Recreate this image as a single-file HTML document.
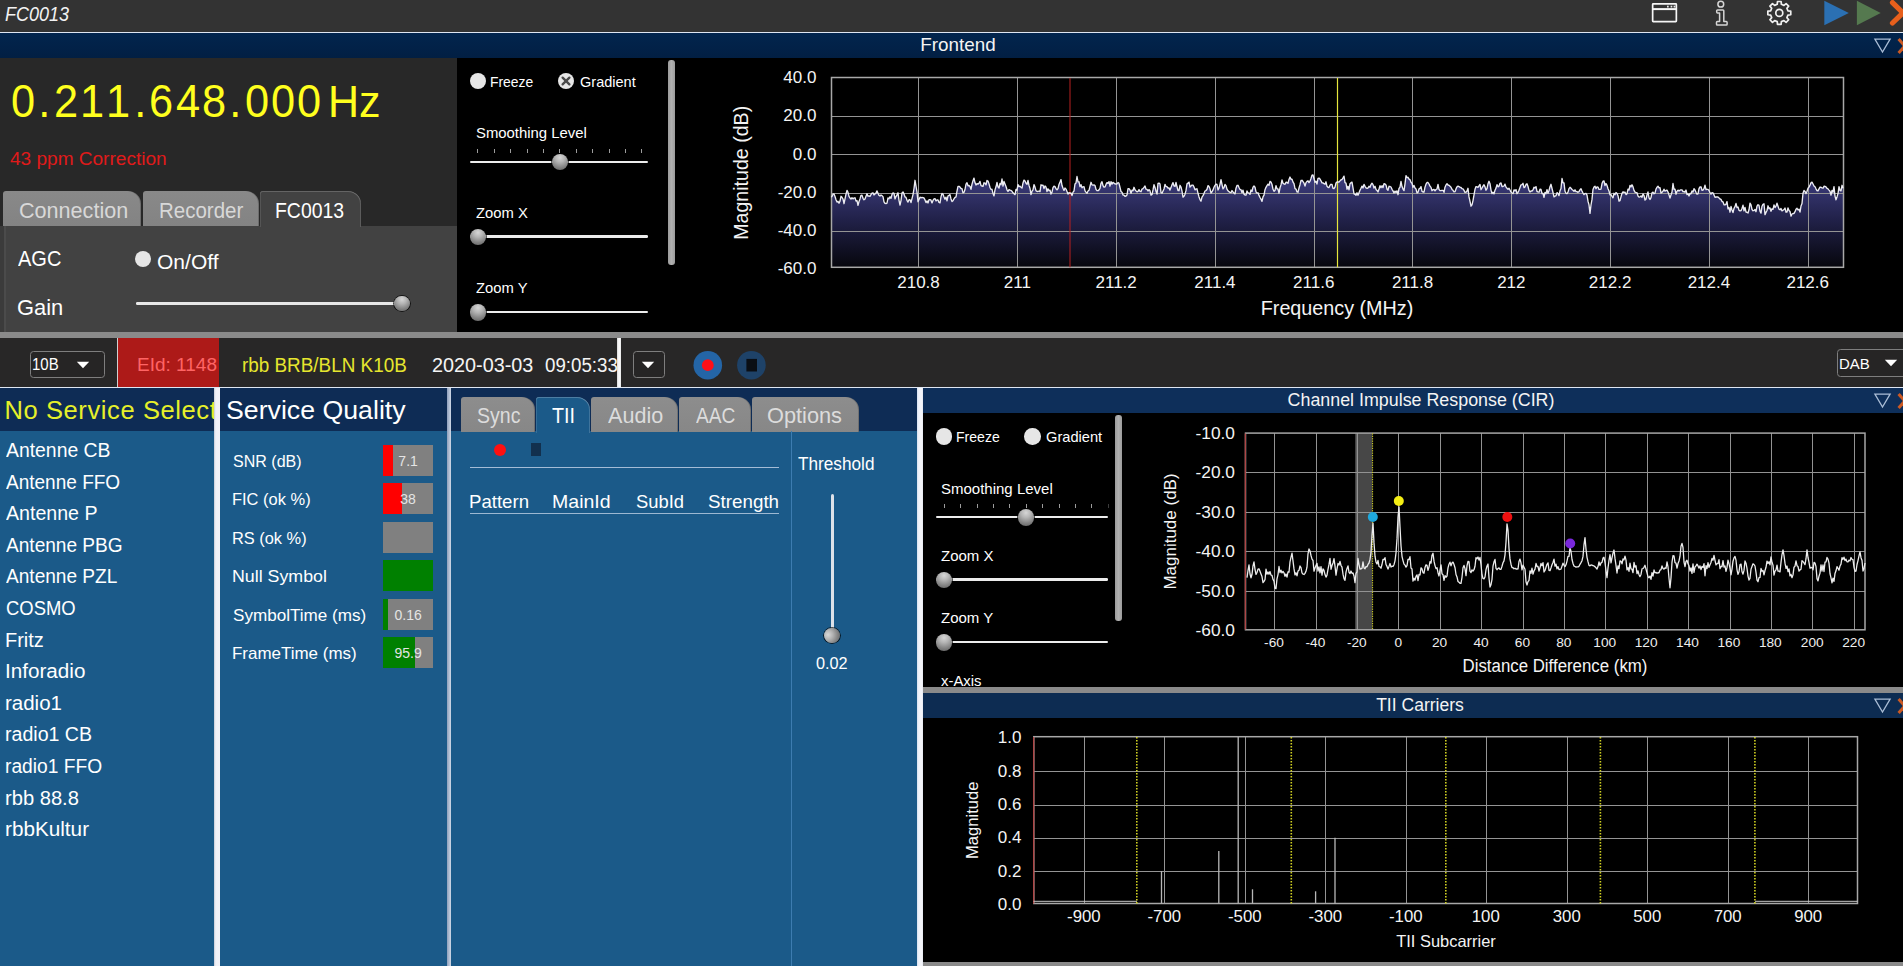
<!DOCTYPE html>
<html><head><meta charset="utf-8"><title>FC0013</title>
<style>
html,body{margin:0;padding:0;background:#000;}
body{width:1903px;height:966px;overflow:hidden;position:relative;font-family:"Liberation Sans",sans-serif;}
#root{position:absolute;left:0;top:0;width:1903px;height:966px;overflow:hidden;background:#000;}
#root div,#root svg{position:absolute;}
.t{position:absolute;white-space:nowrap;display:block;}
.m{position:absolute;white-space:nowrap;left:0;top:0;visibility:hidden;}

.knob{border-radius:50%;box-shadow:0 0 0 0.8px rgba(0,0,0,.85);background:radial-gradient(circle at 50% 22%,#d6d6d6 0%,#b4b4b4 32%,#828282 68%,#5c5c5c 100%);}
.radio{border-radius:50%;background:#e6e6e6;}
.tabg{background:linear-gradient(#8d8d8d,#878787);border-radius:3px 13px 0 0;}
.tabt{background:linear-gradient(#898989,#838383);border-radius:3px 13px 0 0;}

</style></head><body><div id="root">
<div style="left:0px;top:0px;width:1903px;height:32px;background:#333333;"></div>
<div style="left:0px;top:32px;width:1903px;height:1px;background:#dfe6f2;"></div>
<div style="left:0px;top:33px;width:1903px;height:25px;background:linear-gradient(#02254e,#021f43);"></div>
<div style="left:0px;top:58px;width:457px;height:274px;background:#282828;"></div>
<div style="left:457px;top:58px;width:1446px;height:274px;background:#000;"></div>
<div style="left:0px;top:332px;width:1903px;height:6px;background:#8a8a8a;"></div>
<div style="left:0px;top:338px;width:1903px;height:49px;background:#282727;"></div>
<div style="left:0px;top:387px;width:1903px;height:1px;background:#dfe6f2;"></div>
<div style="left:0px;top:388px;width:215px;height:43px;background:#0e2c55;"></div>
<div style="left:0px;top:431px;width:215px;height:535px;background:#1b5a89;"></div>
<div style="left:214.3px;top:388px;width:6.3px;height:578px;background:linear-gradient(90deg,#c4cad6,#f0f1f7 25%,#f2f2f8 80%,#ccd2de);"></div>
<div style="left:220px;top:388px;width:227px;height:43px;background:#0e2c55;"></div>
<div style="left:220px;top:431px;width:227px;height:535px;background:#1b5a89;"></div>
<div style="left:446.6px;top:388px;width:4.2px;height:578px;background:linear-gradient(90deg,#8fa0bc,#cfd8e6);"></div>
<div style="left:451px;top:388px;width:466px;height:43px;background:#0e2c55;"></div>
<div style="left:451px;top:430.7px;width:466px;height:535.3px;background:#1b5a89;"></div>
<div style="left:916.8px;top:388px;width:6.2px;height:578px;background:linear-gradient(90deg,#d4e0f0,#f2f4fa 30%,#f4f5fa 85%,#dfe4ee);"></div>
<div style="left:923px;top:388px;width:980px;height:25px;background:#0e2f5a;"></div>
<div style="left:923px;top:413px;width:980px;height:274px;background:#000;"></div>
<div style="left:923px;top:687px;width:980px;height:6px;background:#8a8a8a;"></div>
<div style="left:923px;top:693px;width:980px;height:25px;background:#0d2c52;"></div>
<div style="left:923px;top:718px;width:980px;height:244px;background:#000;"></div>
<div style="left:923px;top:962px;width:980px;height:4px;background:#8a8a8a;"></div>
<span class="t" style="top:4.23px;font-size:20px;line-height:20px;color:#f2f2f2;font-style:italic;left:5.00px;transform-origin:0 50%;transform:scaleX(0.9010);">FC0013</span>
<svg style="left:1650px;top:2px" width="30" height="24" viewBox="0 0 30 24"><g fill="none" stroke="#f6f6f6" stroke-width="1.7">
<rect x="2.65" y="1.85" width="23.7" height="17.7" rx="0.6"/><line x1="2.65" y1="7.1" x2="26.35" y2="7.1" stroke-width="2"/></g>
<g fill="#e8e8e8"><rect x="17.0" y="3.7" width="1.7" height="1.8"/><rect x="20.6" y="3.7" width="1.7" height="1.8"/><rect x="23.6" y="3.7" width="1.7" height="1.8"/></g></svg>
<svg style="left:1711px;top:0px" width="22" height="28" viewBox="0 0 22 28"><g fill="none" stroke="#d6d6d6" stroke-width="1.5" stroke-linejoin="round">
<circle cx="9.8" cy="4.2" r="2.9"/>
<path d="M6.5 9.9 H12.0 Q12.8 9.9 12.8 10.7 V21.6 H15.3 Q16.1 21.6 16.1 22.4 V24.3 Q16.1 25.1 15.3 25.1 H6.3 Q5.5 25.1 5.5 24.3 V22.4 Q5.5 21.6 6.3 21.6 H8.6 V12.9 H6.5 Q5.7 12.9 5.7 12.1 V10.7 Q5.7 9.9 6.5 9.9Z"/></g></svg>
<svg style="left:1764px;top:0px" width="32" height="30" viewBox="0 0 32 30"><g fill="none" stroke="#f0f0f0" stroke-width="1.7" stroke-linejoin="round">
<path d="M13.49 1.49 L17.11 1.49 L17.38 4.30 L19.95 5.36 L22.12 3.57 L24.68 6.13 L22.89 8.30 L23.95 10.87 L26.76 11.14 L26.76 14.76 L23.95 15.03 L22.89 17.60 L24.68 19.77 L22.12 22.33 L19.95 20.54 L17.38 21.60 L17.11 24.41 L13.49 24.41 L13.22 21.60 L10.65 20.54 L8.48 22.33 L5.92 19.77 L7.71 17.60 L6.65 15.03 L3.84 14.76 L3.84 11.14 L6.65 10.87 L7.71 8.30 L5.92 6.13 L8.48 3.57 L10.65 5.36 L13.22 4.30Z"/><circle cx="15.3" cy="12.95" r="3.5"/></g></svg>
<svg style="left:1820px;top:0px" width="83" height="32" viewBox="0 0 83 32">
<polygon points="4.3,0.7 28.8,13 4.3,25.3" fill="#2b70b3"/>
<polygon points="36.9,0.7 60.7,13 36.9,25.3" fill="#55794f"/>
<g stroke="#e8601c" stroke-width="5.2" stroke-linecap="round"><line x1="72.5" y1="2.6" x2="83" y2="12.8"/><line x1="72.5" y1="23" x2="83" y2="12.8"/></g></svg>
<span class="t" style="top:37.10px;font-size:17.8px;line-height:17.8px;color:#f4f4f4;left:958.24px;transform:translateX(-50%) scaleX(1.0595);">Frontend</span>
<svg style="left:1870px;top:33px" width="33" height="25" viewBox="0 0 33 25">
<polygon points="4.9,6.2 20.1,6.2 12.5,19" fill="none" stroke="#aabdd6" stroke-width="1.3"/>
<g stroke="#cc5a24" stroke-width="3.1"><line x1="28.6" y1="6" x2="41" y2="20"/><line x1="28.6" y1="20" x2="41" y2="6"/></g></svg>
<div style="left:9.95px;top:78.72px;height:45.4px;width:330px;font-size:45.4px;line-height:45.4px;color:#ffff1e;white-space:nowrap;background:none"><span style="position:absolute;left:0.00px;top:0;width:26.3px;text-align:center;transform:scaleX(0.955)">0</span><span style="position:absolute;left:26.30px;top:0;width:16.6px;text-align:center;transform:scaleX(0.955)">.</span><span style="position:absolute;left:42.90px;top:0;width:26.3px;text-align:center;transform:scaleX(0.955)">2</span><span style="position:absolute;left:69.20px;top:0;width:26.3px;text-align:center;transform:scaleX(0.955)">1</span><span style="position:absolute;left:95.50px;top:0;width:26.3px;text-align:center;transform:scaleX(0.955)">1</span><span style="position:absolute;left:121.80px;top:0;width:16.6px;text-align:center;transform:scaleX(0.955)">.</span><span style="position:absolute;left:138.40px;top:0;width:26.3px;text-align:center;transform:scaleX(0.955)">6</span><span style="position:absolute;left:164.70px;top:0;width:26.3px;text-align:center;transform:scaleX(0.955)">4</span><span style="position:absolute;left:191.00px;top:0;width:26.3px;text-align:center;transform:scaleX(0.955)">8</span><span style="position:absolute;left:217.30px;top:0;width:16.6px;text-align:center;transform:scaleX(0.955)">.</span><span style="position:absolute;left:233.90px;top:0;width:26.3px;text-align:center;transform:scaleX(0.955)">0</span><span style="position:absolute;left:260.20px;top:0;width:26.3px;text-align:center;transform:scaleX(0.955)">0</span><span style="position:absolute;left:286.50px;top:0;width:26.3px;text-align:center;transform:scaleX(0.955)">0</span></div>
<span class="t" style="top:80.11px;font-size:44px;line-height:44px;color:#ffff1e;left:328.37px;transform-origin:0 50%;transform:scaleX(0.9780);">Hz</span>
<span class="t" style="top:151.15px;font-size:17.5px;line-height:17.5px;color:#e01a1a;left:9.50px;transform-origin:0 50%;transform:scaleX(1.0878);">43 ppm Correction</span>
<div style="left:0px;top:226.4px;width:457px;height:105.6px;background:#3b3b3b;"></div>
<div style="left:4.3px;top:226.4px;width:1.6px;height:105.6px;background:#4b4b4b;"></div>
<div style="left:5.9px;top:226.4px;width:451.1px;height:105.6px;background:#424242;"></div>
<div class="tabt" style="left:3px;top:191.2px;width:138px;height:35.2px;box-shadow:inset -1px 0 0 rgba(0,0,0,.18)"></div>
<span class="t" style="top:200.25px;font-size:22px;line-height:22px;color:#d8d8d8;left:18.52px;transform-origin:0 50%;transform:scaleX(0.9811);">Connection</span>
<div class="tabt" style="left:143px;top:191.2px;width:116px;height:35.2px;box-shadow:inset -1px 0 0 rgba(0,0,0,.18)"></div>
<span class="t" style="top:200.25px;font-size:22px;line-height:22px;color:#d8d8d8;left:158.57px;transform-origin:0 50%;transform:scaleX(0.9310);">Recorder</span>
<div style="left:260px;top:191.2px;width:101px;height:36.2px;background:#424242;border-radius:3px 13px 0 0;box-shadow:inset 0 1px 0 rgba(255,255,255,.18),inset -1px 0 0 rgba(255,255,255,.14),inset 1px 0 0 rgba(255,255,255,.10)"></div>
<span class="t" style="top:200.25px;font-size:22px;line-height:22px;color:#ffffff;left:274.62px;transform-origin:0 50%;transform:scaleX(0.8827);">FC0013</span>
<span class="t" style="top:247.75px;font-size:22px;line-height:22px;color:#fff;left:18.00px;transform-origin:0 50%;transform:scaleX(0.9103);">AGC</span>
<div class="radio" style="left:135px;top:251px;width:16px;height:16px"></div>
<span class="t" style="top:251.73px;font-size:20px;line-height:20px;color:#fff;left:157.00px;transform-origin:0 50%;transform:scaleX(1.0511);">On/Off</span>
<span class="t" style="top:297.25px;font-size:22px;line-height:22px;color:#fff;left:17.01px;transform-origin:0 50%;transform:scaleX(0.9947);">Gain</span>
<div style="left:136px;top:302.2px;width:264px;height:2.6px;background:#e8e8e8;border-radius:1.3px"></div>
<div class="knob" style="left:394.05px;top:295.55px;width:15.5px;height:15.5px"></div>
<div class="radio" style="left:469.5px;top:73px;width:16px;height:16px"></div>
<span class="t" style="top:74.17px;font-size:15px;line-height:15px;color:#fff;left:490.07px;transform-origin:0 50%;transform:scaleX(0.9263);">Freeze</span>
<svg style="left:557px;top:72px" width="18" height="18" viewBox="0 0 18 18"><circle cx="9" cy="9" r="8" fill="#e6e6e6"/>
<g stroke="#4a4a4a" stroke-width="2.3" stroke-linecap="round"><line x1="5.6" y1="5.6" x2="12.4" y2="12.4"/><line x1="12.4" y1="5.6" x2="5.6" y2="12.4"/></g></svg>
<span class="t" style="top:74.17px;font-size:15px;line-height:15px;color:#fff;left:580.00px;transform-origin:0 50%;transform:scaleX(0.9681);">Gradient</span>
<span class="t" style="top:125.17px;font-size:15px;line-height:15px;color:#fff;left:475.50px;transform-origin:0 50%;transform:scaleX(0.9919);">Smoothing Level</span>
<div style="left:477px;top:148.5px;width:1px;height:4.5px;background:#9c9c9c;"></div>
<div style="left:494px;top:148.5px;width:1px;height:4.5px;background:#9c9c9c;"></div>
<div style="left:510px;top:148.5px;width:1px;height:4.5px;background:#9c9c9c;"></div>
<div style="left:527px;top:148.5px;width:1px;height:4.5px;background:#9c9c9c;"></div>
<div style="left:543px;top:148.5px;width:1px;height:4.5px;background:#9c9c9c;"></div>
<div style="left:559px;top:148.5px;width:1px;height:4.5px;background:#9c9c9c;"></div>
<div style="left:576px;top:148.5px;width:1px;height:4.5px;background:#9c9c9c;"></div>
<div style="left:592px;top:148.5px;width:1px;height:4.5px;background:#9c9c9c;"></div>
<div style="left:609px;top:148.5px;width:1px;height:4.5px;background:#9c9c9c;"></div>
<div style="left:625px;top:148.5px;width:1px;height:4.5px;background:#9c9c9c;"></div>
<div style="left:641px;top:148.5px;width:1px;height:4.5px;background:#9c9c9c;"></div>
<div style="left:470px;top:160.6px;width:177.79999999999995px;height:2.6px;background:#ececec;border-radius:1.3px"></div>
<div class="knob" style="left:552.1999999999999px;top:154.3px;width:16.2px;height:16.2px"></div>
<span class="t" style="top:205.07px;font-size:15px;line-height:15px;color:#fff;left:475.70px;transform-origin:0 50%;transform:scaleX(0.9865);">Zoom X</span>
<div style="left:470px;top:235.39999999999998px;width:177.79999999999995px;height:2.6px;background:#ececec;border-radius:1.3px"></div>
<div class="knob" style="left:470.2px;top:229.1px;width:16.2px;height:16.2px"></div>
<span class="t" style="top:280.07px;font-size:15px;line-height:15px;color:#fff;left:475.70px;transform-origin:0 50%;transform:scaleX(0.9865);">Zoom Y</span>
<div style="left:470px;top:310.7px;width:177.79999999999995px;height:2.6px;background:#ececec;border-radius:1.3px"></div>
<div class="knob" style="left:470.2px;top:304.4px;width:16.2px;height:16.2px"></div>
<div style="left:668.3px;top:60px;width:6.3px;height:205px;background:linear-gradient(90deg,#9c9c9c,#b0b0b0 50%,#9c9c9c);border-radius:3px"></div>
<svg style="left:0;top:58px" width="1903" height="274" viewBox="0 58 1903 274"><defs><linearGradient id="sg" x1="0" y1="0" x2="0" y2="1" gradientUnits="userSpaceOnUse" gradientTransform="translate(0,180) scale(1,88)"><stop offset="0" stop-color="#3b3b7a"/><stop offset="0.45" stop-color="#212149"/><stop offset="1" stop-color="#06060c"/></linearGradient></defs><polygon points="831,267.3 831.0,196.8 832.0,196.6 833.0,194.2 834.0,194.0 835.0,196.5 836.0,199.7 837.0,202.1 838.0,201.3 839.0,203.2 840.0,201.1 841.0,196.3 842.0,197.3 843.0,199.0 844.0,203.7 845.0,198.8 846.0,194.1 847.0,190.4 848.0,192.3 849.0,196.3 850.0,198.0 851.0,199.1 852.0,197.7 853.0,198.9 854.0,197.9 855.0,197.8 856.0,201.0 857.0,200.6 858.0,205.3 859.0,201.5 860.0,198.9 861.0,195.3 862.0,195.2 863.0,198.3 864.0,199.8 865.0,198.9 866.0,196.2 867.0,193.8 868.0,196.2 869.0,196.0 870.0,196.3 871.0,194.7 872.0,193.2 873.0,192.9 874.0,195.0 875.0,193.9 876.0,193.1 877.0,190.9 878.0,193.3 879.0,195.4 880.0,196.0 881.0,195.0 882.0,195.6 883.0,196.7 884.0,201.8 885.0,203.4 886.0,203.5 887.0,203.1 888.0,197.9 889.0,198.8 890.0,196.8 891.0,198.4 892.0,194.4 893.0,192.9 894.0,193.4 895.0,198.9 896.0,196.6 897.0,194.9 898.0,192.8 899.0,200.3 900.0,205.0 901.0,200.6 902.0,192.9 903.0,191.9 904.0,194.1 905.0,196.9 906.0,197.4 907.0,200.3 908.0,202.1 909.0,199.7 910.0,199.7 911.0,202.5 912.0,198.6 913.0,194.6 914.0,188.5 915.0,180.3 916.0,186.2 917.0,192.0 918.0,201.7 919.0,199.4 920.0,197.2 921.0,197.8 922.0,197.4 923.0,197.6 924.0,198.0 925.0,199.9 926.0,202.6 927.0,200.9 928.0,203.0 929.0,199.6 930.0,199.6 931.0,200.2 932.0,202.9 933.0,200.4 934.0,198.9 935.0,198.6 936.0,200.9 937.0,199.9 938.0,200.0 939.0,202.4 940.0,202.9 941.0,196.9 942.0,193.5 943.0,194.1 944.0,197.0 945.0,199.2 946.0,197.1 947.0,200.8 948.0,195.8 949.0,195.4 950.0,194.6 951.0,198.9 952.0,201.5 953.0,200.7 954.0,198.8 955.0,197.3 956.0,197.0 957.0,191.1 958.0,186.3 959.0,186.3 960.0,187.1 961.0,188.5 962.0,188.6 963.0,192.8 964.0,192.4 965.0,189.5 966.0,184.1 967.0,182.7 968.0,185.8 969.0,185.5 970.0,186.5 971.0,189.3 972.0,184.1 973.0,180.7 974.0,178.1 975.0,182.8 976.0,185.0 977.0,183.6 978.0,184.1 979.0,183.3 980.0,181.4 981.0,185.7 982.0,186.0 983.0,186.4 984.0,182.8 985.0,183.2 986.0,184.9 987.0,180.5 988.0,181.0 989.0,183.9 990.0,187.5 991.0,189.4 992.0,189.3 993.0,193.4 994.0,195.9 995.0,189.9 996.0,186.8 997.0,182.5 998.0,186.8 999.0,188.1 1000.0,183.4 1001.0,184.7 1002.0,179.0 1003.0,186.1 1004.0,181.5 1005.0,184.0 1006.0,186.5 1007.0,189.8 1008.0,191.5 1009.0,189.6 1010.0,190.2 1011.0,190.4 1012.0,191.3 1013.0,192.8 1014.0,193.8 1015.0,194.6 1016.0,189.4 1017.0,190.2 1018.0,184.6 1019.0,186.6 1020.0,186.2 1021.0,187.2 1022.0,188.1 1023.0,182.9 1024.0,180.1 1025.0,181.0 1026.0,183.2 1027.0,184.4 1028.0,180.5 1029.0,185.4 1030.0,188.5 1031.0,194.6 1032.0,191.2 1033.0,189.8 1034.0,184.6 1035.0,187.1 1036.0,190.7 1037.0,191.4 1038.0,191.5 1039.0,191.0 1040.0,191.6 1041.0,184.8 1042.0,185.4 1043.0,185.1 1044.0,188.5 1045.0,185.9 1046.0,186.9 1047.0,191.6 1048.0,188.8 1049.0,190.7 1050.0,190.1 1051.0,194.0 1052.0,192.1 1053.0,187.6 1054.0,186.1 1055.0,186.6 1056.0,188.8 1057.0,189.8 1058.0,188.6 1059.0,184.4 1060.0,182.1 1061.0,179.6 1062.0,185.6 1063.0,188.2 1064.0,190.4 1065.0,188.0 1066.0,189.1 1067.0,191.4 1068.0,194.0 1069.0,192.7 1070.0,193.3 1071.0,192.9 1072.0,195.5 1073.0,192.1 1074.0,191.0 1075.0,183.9 1076.0,182.9 1077.0,176.5 1078.0,181.9 1079.0,181.8 1080.0,186.6 1081.0,184.7 1082.0,187.9 1083.0,186.8 1084.0,186.7 1085.0,190.8 1086.0,192.2 1087.0,193.2 1088.0,191.0 1089.0,190.3 1090.0,186.4 1091.0,182.3 1092.0,184.8 1093.0,185.1 1094.0,184.9 1095.0,185.5 1096.0,189.3 1097.0,190.6 1098.0,190.7 1099.0,189.9 1100.0,188.3 1101.0,183.3 1102.0,181.7 1103.0,185.7 1104.0,187.2 1105.0,186.9 1106.0,184.4 1107.0,182.6 1108.0,183.4 1109.0,181.7 1110.0,186.2 1111.0,181.6 1112.0,184.2 1113.0,182.4 1114.0,183.2 1115.0,183.8 1116.0,184.0 1117.0,184.0 1118.0,182.5 1119.0,183.3 1120.0,187.5 1121.0,191.5 1122.0,192.3 1123.0,195.1 1124.0,195.1 1125.0,196.3 1126.0,196.0 1127.0,195.0 1128.0,188.6 1129.0,188.7 1130.0,190.0 1131.0,193.3 1132.0,190.2 1133.0,190.7 1134.0,187.3 1135.0,189.7 1136.0,190.9 1137.0,191.8 1138.0,191.3 1139.0,189.6 1140.0,191.4 1141.0,191.7 1142.0,189.1 1143.0,188.6 1144.0,187.3 1145.0,186.0 1146.0,189.2 1147.0,189.3 1148.0,191.0 1149.0,189.6 1150.0,190.8 1151.0,195.1 1152.0,194.5 1153.0,189.9 1154.0,184.7 1155.0,187.4 1156.0,191.3 1157.0,194.1 1158.0,183.4 1159.0,183.1 1160.0,184.1 1161.0,192.7 1162.0,193.2 1163.0,191.0 1164.0,189.0 1165.0,184.4 1166.0,186.5 1167.0,186.6 1168.0,188.1 1169.0,187.9 1170.0,190.1 1171.0,187.6 1172.0,184.7 1173.0,182.6 1174.0,186.0 1175.0,186.5 1176.0,182.5 1177.0,186.8 1178.0,190.5 1179.0,190.7 1180.0,185.3 1181.0,187.0 1182.0,191.2 1183.0,197.1 1184.0,196.3 1185.0,194.2 1186.0,190.4 1187.0,183.8 1188.0,183.2 1189.0,182.1 1190.0,187.0 1191.0,186.0 1192.0,185.1 1193.0,185.1 1194.0,187.0 1195.0,189.9 1196.0,189.0 1197.0,188.8 1198.0,193.3 1199.0,196.9 1200.0,199.6 1201.0,201.2 1202.0,197.1 1203.0,195.6 1204.0,193.6 1205.0,191.0 1206.0,190.5 1207.0,189.3 1208.0,185.6 1209.0,186.5 1210.0,188.8 1211.0,193.0 1212.0,191.8 1213.0,189.9 1214.0,187.3 1215.0,185.4 1216.0,184.1 1217.0,184.5 1218.0,190.0 1219.0,188.2 1220.0,184.3 1221.0,179.7 1222.0,184.5 1223.0,188.9 1224.0,187.6 1225.0,184.4 1226.0,185.6 1227.0,189.2 1228.0,190.8 1229.0,191.7 1230.0,192.3 1231.0,192.6 1232.0,190.5 1233.0,192.1 1234.0,193.1 1235.0,193.9 1236.0,188.2 1237.0,185.4 1238.0,185.3 1239.0,187.5 1240.0,189.5 1241.0,189.6 1242.0,192.8 1243.0,190.1 1244.0,194.2 1245.0,195.0 1246.0,195.1 1247.0,191.0 1248.0,192.8 1249.0,193.1 1250.0,194.3 1251.0,190.0 1252.0,191.5 1253.0,187.1 1254.0,186.0 1255.0,187.2 1256.0,191.9 1257.0,193.2 1258.0,192.8 1259.0,195.4 1260.0,197.5 1261.0,199.2 1262.0,201.4 1263.0,196.9 1264.0,195.1 1265.0,189.7 1266.0,187.3 1267.0,185.6 1268.0,184.2 1269.0,185.4 1270.0,181.4 1271.0,182.0 1272.0,184.5 1273.0,189.3 1274.0,191.3 1275.0,190.4 1276.0,185.7 1277.0,188.8 1278.0,189.0 1279.0,193.2 1280.0,187.8 1281.0,184.9 1282.0,179.9 1283.0,183.3 1284.0,183.9 1285.0,184.3 1286.0,182.2 1287.0,182.5 1288.0,183.3 1289.0,179.4 1290.0,177.0 1291.0,179.2 1292.0,179.2 1293.0,182.1 1294.0,183.7 1295.0,188.7 1296.0,189.1 1297.0,191.9 1298.0,192.2 1299.0,188.0 1300.0,184.7 1301.0,180.5 1302.0,180.3 1303.0,181.5 1304.0,183.1 1305.0,186.0 1306.0,182.6 1307.0,181.4 1308.0,180.8 1309.0,182.6 1310.0,181.2 1311.0,178.5 1312.0,175.1 1313.0,174.9 1314.0,178.8 1315.0,182.3 1316.0,181.3 1317.0,184.0 1318.0,178.3 1319.0,178.1 1320.0,179.1 1321.0,180.8 1322.0,182.9 1323.0,182.9 1324.0,183.7 1325.0,184.2 1326.0,181.8 1327.0,186.3 1328.0,187.3 1329.0,187.6 1330.0,185.2 1331.0,184.3 1332.0,184.4 1333.0,188.3 1334.0,188.5 1335.0,187.2 1336.0,183.0 1337.0,182.0 1338.0,181.8 1339.0,182.1 1340.0,180.9 1341.0,179.8 1342.0,179.5 1343.0,177.9 1344.0,176.2 1345.0,182.7 1346.0,183.2 1347.0,189.2 1348.0,186.3 1349.0,189.8 1350.0,183.7 1351.0,182.7 1352.0,182.1 1353.0,187.8 1354.0,193.8 1355.0,194.3 1356.0,195.3 1357.0,192.8 1358.0,195.2 1359.0,192.7 1360.0,190.2 1361.0,188.3 1362.0,186.1 1363.0,188.0 1364.0,184.4 1365.0,186.3 1366.0,187.9 1367.0,188.3 1368.0,188.0 1369.0,186.3 1370.0,187.2 1371.0,184.6 1372.0,183.2 1373.0,184.6 1374.0,188.0 1375.0,186.3 1376.0,189.4 1377.0,190.4 1378.0,192.0 1379.0,189.0 1380.0,185.7 1381.0,187.7 1382.0,185.7 1383.0,187.6 1384.0,183.7 1385.0,184.0 1386.0,184.9 1387.0,189.2 1388.0,190.2 1389.0,186.3 1390.0,186.5 1391.0,187.0 1392.0,189.3 1393.0,190.9 1394.0,193.0 1395.0,191.1 1396.0,192.5 1397.0,190.8 1398.0,194.7 1399.0,188.4 1400.0,187.2 1401.0,181.4 1402.0,186.6 1403.0,189.1 1404.0,190.6 1405.0,183.8 1406.0,175.7 1407.0,177.5 1408.0,177.3 1409.0,179.1 1410.0,179.7 1411.0,182.2 1412.0,183.4 1413.0,187.3 1414.0,185.4 1415.0,188.1 1416.0,189.0 1417.0,192.8 1418.0,192.3 1419.0,188.9 1420.0,188.3 1421.0,186.6 1422.0,191.4 1423.0,192.0 1424.0,192.1 1425.0,187.1 1426.0,184.2 1427.0,182.5 1428.0,182.5 1429.0,184.0 1430.0,186.1 1431.0,187.4 1432.0,190.7 1433.0,189.7 1434.0,189.5 1435.0,190.9 1436.0,189.5 1437.0,189.0 1438.0,184.5 1439.0,189.3 1440.0,190.6 1441.0,190.6 1442.0,190.3 1443.0,190.4 1444.0,192.3 1445.0,187.2 1446.0,184.9 1447.0,183.8 1448.0,185.0 1449.0,185.3 1450.0,186.3 1451.0,187.3 1452.0,189.4 1453.0,190.3 1454.0,191.8 1455.0,191.7 1456.0,188.9 1457.0,186.8 1458.0,186.2 1459.0,186.6 1460.0,187.3 1461.0,187.5 1462.0,188.7 1463.0,188.9 1464.0,190.4 1465.0,192.4 1466.0,192.2 1467.0,191.0 1468.0,188.3 1469.0,196.9 1470.0,201.3 1471.0,206.2 1472.0,204.8 1473.0,200.6 1474.0,194.9 1475.0,189.3 1476.0,186.6 1477.0,186.9 1478.0,187.3 1479.0,185.9 1480.0,184.5 1481.0,189.7 1482.0,188.0 1483.0,186.1 1484.0,184.7 1485.0,186.9 1486.0,190.2 1487.0,188.7 1488.0,183.8 1489.0,181.3 1490.0,183.7 1491.0,190.1 1492.0,193.5 1493.0,192.3 1494.0,193.9 1495.0,190.2 1496.0,188.1 1497.0,184.6 1498.0,186.8 1499.0,186.2 1500.0,183.3 1501.0,183.0 1502.0,186.5 1503.0,186.5 1504.0,186.0 1505.0,184.1 1506.0,187.1 1507.0,188.2 1508.0,189.4 1509.0,188.3 1510.0,190.0 1511.0,192.1 1512.0,193.0 1513.0,193.6 1514.0,189.9 1515.0,190.7 1516.0,189.6 1517.0,193.7 1518.0,192.4 1519.0,190.3 1520.0,187.6 1521.0,184.8 1522.0,184.7 1523.0,183.3 1524.0,187.6 1525.0,186.9 1526.0,184.4 1527.0,183.8 1528.0,186.5 1529.0,190.3 1530.0,192.0 1531.0,190.9 1532.0,191.0 1533.0,189.9 1534.0,187.2 1535.0,187.9 1536.0,186.6 1537.0,191.5 1538.0,191.9 1539.0,192.2 1540.0,189.1 1541.0,189.5 1542.0,193.6 1543.0,193.4 1544.0,197.4 1545.0,192.4 1546.0,193.7 1547.0,189.7 1548.0,193.3 1549.0,190.5 1550.0,186.8 1551.0,184.3 1552.0,188.5 1553.0,192.5 1554.0,196.8 1555.0,196.2 1556.0,195.7 1557.0,192.6 1558.0,193.5 1559.0,195.6 1560.0,190.8 1561.0,188.5 1562.0,178.5 1563.0,182.8 1564.0,182.9 1565.0,191.3 1566.0,193.3 1567.0,193.6 1568.0,192.1 1569.0,188.6 1570.0,187.3 1571.0,188.3 1572.0,189.5 1573.0,190.2 1574.0,191.4 1575.0,189.8 1576.0,191.6 1577.0,191.7 1578.0,192.3 1579.0,191.6 1580.0,189.8 1581.0,188.7 1582.0,191.1 1583.0,193.0 1584.0,194.6 1585.0,193.6 1586.0,193.4 1587.0,195.2 1588.0,201.2 1589.0,204.9 1590.0,213.3 1591.0,205.0 1592.0,199.4 1593.0,189.4 1594.0,187.0 1595.0,186.2 1596.0,188.7 1597.0,186.9 1598.0,187.1 1599.0,189.4 1600.0,189.4 1601.0,189.2 1602.0,183.6 1603.0,181.2 1604.0,181.0 1605.0,185.5 1606.0,183.5 1607.0,185.4 1608.0,188.8 1609.0,191.0 1610.0,194.8 1611.0,194.7 1612.0,196.3 1613.0,197.8 1614.0,193.3 1615.0,194.7 1616.0,192.5 1617.0,193.5 1618.0,195.7 1619.0,201.0 1620.0,200.6 1621.0,196.9 1622.0,193.3 1623.0,191.8 1624.0,192.4 1625.0,192.1 1626.0,194.6 1627.0,193.8 1628.0,189.1 1629.0,190.1 1630.0,185.5 1631.0,186.9 1632.0,184.8 1633.0,186.9 1634.0,190.4 1635.0,192.2 1636.0,192.6 1637.0,192.7 1638.0,196.0 1639.0,197.1 1640.0,196.8 1641.0,195.9 1642.0,197.3 1643.0,194.0 1644.0,195.3 1645.0,200.1 1646.0,199.2 1647.0,194.9 1648.0,192.0 1649.0,197.9 1650.0,199.5 1651.0,197.6 1652.0,192.8 1653.0,192.2 1654.0,193.8 1655.0,193.1 1656.0,189.1 1657.0,187.2 1658.0,186.2 1659.0,187.9 1660.0,187.7 1661.0,193.0 1662.0,192.2 1663.0,191.2 1664.0,189.2 1665.0,191.1 1666.0,190.5 1667.0,190.2 1668.0,192.0 1669.0,194.9 1670.0,198.0 1671.0,194.9 1672.0,192.1 1673.0,183.5 1674.0,189.3 1675.0,189.1 1676.0,194.2 1677.0,191.2 1678.0,190.1 1679.0,191.0 1680.0,190.2 1681.0,189.8 1682.0,189.9 1683.0,191.8 1684.0,191.4 1685.0,192.2 1686.0,190.0 1687.0,194.5 1688.0,193.9 1689.0,196.0 1690.0,193.4 1691.0,193.8 1692.0,191.0 1693.0,192.1 1694.0,188.7 1695.0,189.9 1696.0,192.2 1697.0,194.2 1698.0,193.8 1699.0,188.6 1700.0,186.8 1701.0,186.8 1702.0,190.3 1703.0,190.1 1704.0,188.7 1705.0,185.1 1706.0,189.6 1707.0,189.3 1708.0,189.4 1709.0,190.5 1710.0,192.7 1711.0,194.2 1712.0,192.6 1713.0,192.9 1714.0,194.9 1715.0,197.3 1716.0,197.0 1717.0,197.0 1718.0,197.0 1719.0,197.9 1720.0,199.0 1721.0,199.4 1722.0,201.5 1723.0,201.8 1724.0,204.8 1725.0,204.9 1726.0,204.2 1727.0,201.6 1728.0,208.9 1729.0,207.5 1730.0,212.2 1731.0,206.5 1732.0,210.0 1733.0,212.5 1734.0,208.3 1735.0,206.7 1736.0,203.4 1737.0,207.5 1738.0,207.0 1739.0,210.2 1740.0,210.9 1741.0,210.6 1742.0,208.5 1743.0,205.2 1744.0,210.8 1745.0,207.5 1746.0,212.0 1747.0,212.3 1748.0,213.0 1749.0,209.8 1750.0,203.1 1751.0,204.8 1752.0,209.5 1753.0,210.7 1754.0,210.6 1755.0,209.5 1756.0,211.7 1757.0,206.1 1758.0,204.7 1759.0,205.4 1760.0,211.2 1761.0,213.1 1762.0,206.2 1763.0,204.3 1764.0,203.8 1765.0,214.6 1766.0,212.4 1767.0,210.5 1768.0,205.8 1769.0,208.7 1770.0,207.9 1771.0,211.2 1772.0,208.8 1773.0,209.4 1774.0,204.9 1775.0,207.5 1776.0,206.1 1777.0,203.2 1778.0,206.2 1779.0,209.1 1780.0,209.8 1781.0,208.5 1782.0,210.9 1783.0,210.2 1784.0,209.5 1785.0,208.0 1786.0,212.2 1787.0,212.1 1788.0,207.9 1789.0,210.5 1790.0,211.5 1791.0,216.1 1792.0,214.0 1793.0,213.5 1794.0,213.5 1795.0,211.7 1796.0,209.3 1797.0,208.3 1798.0,209.9 1799.0,209.2 1800.0,212.1 1801.0,206.0 1802.0,203.5 1803.0,193.2 1804.0,190.4 1805.0,191.4 1806.0,193.6 1807.0,191.2 1808.0,188.3 1809.0,187.1 1810.0,185.1 1811.0,182.9 1812.0,182.1 1813.0,184.0 1814.0,186.0 1815.0,186.8 1816.0,188.8 1817.0,190.6 1818.0,190.9 1819.0,188.9 1820.0,187.2 1821.0,187.2 1822.0,187.9 1823.0,188.2 1824.0,186.2 1825.0,186.5 1826.0,186.8 1827.0,188.4 1828.0,188.9 1829.0,190.1 1830.0,191.2 1831.0,195.1 1832.0,190.4 1833.0,192.2 1834.0,186.6 1835.0,196.1 1836.0,199.7 1837.0,196.9 1838.0,193.6 1839.0,186.7 1840.0,190.3 1841.0,190.9 1842.0,185.3 1843.0,188.3 1843,267.3" fill="url(#sg)"/><g stroke="#949494" stroke-width="1" shape-rendering="crispEdges"><line x1="831" y1="116.5" x2="1843" y2="116.5"/><line x1="831" y1="154.5" x2="1843" y2="154.5"/><line x1="831" y1="193.5" x2="1843" y2="193.5"/><line x1="831" y1="231.5" x2="1843" y2="231.5"/><line x1="918.5" y1="78" x2="918.5" y2="267.3"/><line x1="1017.5" y1="78" x2="1017.5" y2="267.3"/><line x1="1116.5" y1="78" x2="1116.5" y2="267.3"/><line x1="1215.5" y1="78" x2="1215.5" y2="267.3"/><line x1="1314.5" y1="78" x2="1314.5" y2="267.3"/><line x1="1412.5" y1="78" x2="1412.5" y2="267.3"/><line x1="1511.5" y1="78" x2="1511.5" y2="267.3"/><line x1="1610.5" y1="78" x2="1610.5" y2="267.3"/><line x1="1709.5" y1="78" x2="1709.5" y2="267.3"/><line x1="1808.5" y1="78" x2="1808.5" y2="267.3"/></g><rect x="831.5" y="77.5" width="1012" height="189.8" fill="none" stroke="#a8a8a8" stroke-width="1.5"/><line x1="1070" y1="78" x2="1070" y2="267.3" stroke="#b82020" stroke-width="1"/><line x1="1337.5" y1="78" x2="1337.5" y2="267.3" stroke="#e6e63c" stroke-width="1.2"/><polyline points="831.0,196.8 832.0,196.6 833.0,194.2 834.0,194.0 835.0,196.5 836.0,199.7 837.0,202.1 838.0,201.3 839.0,203.2 840.0,201.1 841.0,196.3 842.0,197.3 843.0,199.0 844.0,203.7 845.0,198.8 846.0,194.1 847.0,190.4 848.0,192.3 849.0,196.3 850.0,198.0 851.0,199.1 852.0,197.7 853.0,198.9 854.0,197.9 855.0,197.8 856.0,201.0 857.0,200.6 858.0,205.3 859.0,201.5 860.0,198.9 861.0,195.3 862.0,195.2 863.0,198.3 864.0,199.8 865.0,198.9 866.0,196.2 867.0,193.8 868.0,196.2 869.0,196.0 870.0,196.3 871.0,194.7 872.0,193.2 873.0,192.9 874.0,195.0 875.0,193.9 876.0,193.1 877.0,190.9 878.0,193.3 879.0,195.4 880.0,196.0 881.0,195.0 882.0,195.6 883.0,196.7 884.0,201.8 885.0,203.4 886.0,203.5 887.0,203.1 888.0,197.9 889.0,198.8 890.0,196.8 891.0,198.4 892.0,194.4 893.0,192.9 894.0,193.4 895.0,198.9 896.0,196.6 897.0,194.9 898.0,192.8 899.0,200.3 900.0,205.0 901.0,200.6 902.0,192.9 903.0,191.9 904.0,194.1 905.0,196.9 906.0,197.4 907.0,200.3 908.0,202.1 909.0,199.7 910.0,199.7 911.0,202.5 912.0,198.6 913.0,194.6 914.0,188.5 915.0,180.3 916.0,186.2 917.0,192.0 918.0,201.7 919.0,199.4 920.0,197.2 921.0,197.8 922.0,197.4 923.0,197.6 924.0,198.0 925.0,199.9 926.0,202.6 927.0,200.9 928.0,203.0 929.0,199.6 930.0,199.6 931.0,200.2 932.0,202.9 933.0,200.4 934.0,198.9 935.0,198.6 936.0,200.9 937.0,199.9 938.0,200.0 939.0,202.4 940.0,202.9 941.0,196.9 942.0,193.5 943.0,194.1 944.0,197.0 945.0,199.2 946.0,197.1 947.0,200.8 948.0,195.8 949.0,195.4 950.0,194.6 951.0,198.9 952.0,201.5 953.0,200.7 954.0,198.8 955.0,197.3 956.0,197.0 957.0,191.1 958.0,186.3 959.0,186.3 960.0,187.1 961.0,188.5 962.0,188.6 963.0,192.8 964.0,192.4 965.0,189.5 966.0,184.1 967.0,182.7 968.0,185.8 969.0,185.5 970.0,186.5 971.0,189.3 972.0,184.1 973.0,180.7 974.0,178.1 975.0,182.8 976.0,185.0 977.0,183.6 978.0,184.1 979.0,183.3 980.0,181.4 981.0,185.7 982.0,186.0 983.0,186.4 984.0,182.8 985.0,183.2 986.0,184.9 987.0,180.5 988.0,181.0 989.0,183.9 990.0,187.5 991.0,189.4 992.0,189.3 993.0,193.4 994.0,195.9 995.0,189.9 996.0,186.8 997.0,182.5 998.0,186.8 999.0,188.1 1000.0,183.4 1001.0,184.7 1002.0,179.0 1003.0,186.1 1004.0,181.5 1005.0,184.0 1006.0,186.5 1007.0,189.8 1008.0,191.5 1009.0,189.6 1010.0,190.2 1011.0,190.4 1012.0,191.3 1013.0,192.8 1014.0,193.8 1015.0,194.6 1016.0,189.4 1017.0,190.2 1018.0,184.6 1019.0,186.6 1020.0,186.2 1021.0,187.2 1022.0,188.1 1023.0,182.9 1024.0,180.1 1025.0,181.0 1026.0,183.2 1027.0,184.4 1028.0,180.5 1029.0,185.4 1030.0,188.5 1031.0,194.6 1032.0,191.2 1033.0,189.8 1034.0,184.6 1035.0,187.1 1036.0,190.7 1037.0,191.4 1038.0,191.5 1039.0,191.0 1040.0,191.6 1041.0,184.8 1042.0,185.4 1043.0,185.1 1044.0,188.5 1045.0,185.9 1046.0,186.9 1047.0,191.6 1048.0,188.8 1049.0,190.7 1050.0,190.1 1051.0,194.0 1052.0,192.1 1053.0,187.6 1054.0,186.1 1055.0,186.6 1056.0,188.8 1057.0,189.8 1058.0,188.6 1059.0,184.4 1060.0,182.1 1061.0,179.6 1062.0,185.6 1063.0,188.2 1064.0,190.4 1065.0,188.0 1066.0,189.1 1067.0,191.4 1068.0,194.0 1069.0,192.7 1070.0,193.3 1071.0,192.9 1072.0,195.5 1073.0,192.1 1074.0,191.0 1075.0,183.9 1076.0,182.9 1077.0,176.5 1078.0,181.9 1079.0,181.8 1080.0,186.6 1081.0,184.7 1082.0,187.9 1083.0,186.8 1084.0,186.7 1085.0,190.8 1086.0,192.2 1087.0,193.2 1088.0,191.0 1089.0,190.3 1090.0,186.4 1091.0,182.3 1092.0,184.8 1093.0,185.1 1094.0,184.9 1095.0,185.5 1096.0,189.3 1097.0,190.6 1098.0,190.7 1099.0,189.9 1100.0,188.3 1101.0,183.3 1102.0,181.7 1103.0,185.7 1104.0,187.2 1105.0,186.9 1106.0,184.4 1107.0,182.6 1108.0,183.4 1109.0,181.7 1110.0,186.2 1111.0,181.6 1112.0,184.2 1113.0,182.4 1114.0,183.2 1115.0,183.8 1116.0,184.0 1117.0,184.0 1118.0,182.5 1119.0,183.3 1120.0,187.5 1121.0,191.5 1122.0,192.3 1123.0,195.1 1124.0,195.1 1125.0,196.3 1126.0,196.0 1127.0,195.0 1128.0,188.6 1129.0,188.7 1130.0,190.0 1131.0,193.3 1132.0,190.2 1133.0,190.7 1134.0,187.3 1135.0,189.7 1136.0,190.9 1137.0,191.8 1138.0,191.3 1139.0,189.6 1140.0,191.4 1141.0,191.7 1142.0,189.1 1143.0,188.6 1144.0,187.3 1145.0,186.0 1146.0,189.2 1147.0,189.3 1148.0,191.0 1149.0,189.6 1150.0,190.8 1151.0,195.1 1152.0,194.5 1153.0,189.9 1154.0,184.7 1155.0,187.4 1156.0,191.3 1157.0,194.1 1158.0,183.4 1159.0,183.1 1160.0,184.1 1161.0,192.7 1162.0,193.2 1163.0,191.0 1164.0,189.0 1165.0,184.4 1166.0,186.5 1167.0,186.6 1168.0,188.1 1169.0,187.9 1170.0,190.1 1171.0,187.6 1172.0,184.7 1173.0,182.6 1174.0,186.0 1175.0,186.5 1176.0,182.5 1177.0,186.8 1178.0,190.5 1179.0,190.7 1180.0,185.3 1181.0,187.0 1182.0,191.2 1183.0,197.1 1184.0,196.3 1185.0,194.2 1186.0,190.4 1187.0,183.8 1188.0,183.2 1189.0,182.1 1190.0,187.0 1191.0,186.0 1192.0,185.1 1193.0,185.1 1194.0,187.0 1195.0,189.9 1196.0,189.0 1197.0,188.8 1198.0,193.3 1199.0,196.9 1200.0,199.6 1201.0,201.2 1202.0,197.1 1203.0,195.6 1204.0,193.6 1205.0,191.0 1206.0,190.5 1207.0,189.3 1208.0,185.6 1209.0,186.5 1210.0,188.8 1211.0,193.0 1212.0,191.8 1213.0,189.9 1214.0,187.3 1215.0,185.4 1216.0,184.1 1217.0,184.5 1218.0,190.0 1219.0,188.2 1220.0,184.3 1221.0,179.7 1222.0,184.5 1223.0,188.9 1224.0,187.6 1225.0,184.4 1226.0,185.6 1227.0,189.2 1228.0,190.8 1229.0,191.7 1230.0,192.3 1231.0,192.6 1232.0,190.5 1233.0,192.1 1234.0,193.1 1235.0,193.9 1236.0,188.2 1237.0,185.4 1238.0,185.3 1239.0,187.5 1240.0,189.5 1241.0,189.6 1242.0,192.8 1243.0,190.1 1244.0,194.2 1245.0,195.0 1246.0,195.1 1247.0,191.0 1248.0,192.8 1249.0,193.1 1250.0,194.3 1251.0,190.0 1252.0,191.5 1253.0,187.1 1254.0,186.0 1255.0,187.2 1256.0,191.9 1257.0,193.2 1258.0,192.8 1259.0,195.4 1260.0,197.5 1261.0,199.2 1262.0,201.4 1263.0,196.9 1264.0,195.1 1265.0,189.7 1266.0,187.3 1267.0,185.6 1268.0,184.2 1269.0,185.4 1270.0,181.4 1271.0,182.0 1272.0,184.5 1273.0,189.3 1274.0,191.3 1275.0,190.4 1276.0,185.7 1277.0,188.8 1278.0,189.0 1279.0,193.2 1280.0,187.8 1281.0,184.9 1282.0,179.9 1283.0,183.3 1284.0,183.9 1285.0,184.3 1286.0,182.2 1287.0,182.5 1288.0,183.3 1289.0,179.4 1290.0,177.0 1291.0,179.2 1292.0,179.2 1293.0,182.1 1294.0,183.7 1295.0,188.7 1296.0,189.1 1297.0,191.9 1298.0,192.2 1299.0,188.0 1300.0,184.7 1301.0,180.5 1302.0,180.3 1303.0,181.5 1304.0,183.1 1305.0,186.0 1306.0,182.6 1307.0,181.4 1308.0,180.8 1309.0,182.6 1310.0,181.2 1311.0,178.5 1312.0,175.1 1313.0,174.9 1314.0,178.8 1315.0,182.3 1316.0,181.3 1317.0,184.0 1318.0,178.3 1319.0,178.1 1320.0,179.1 1321.0,180.8 1322.0,182.9 1323.0,182.9 1324.0,183.7 1325.0,184.2 1326.0,181.8 1327.0,186.3 1328.0,187.3 1329.0,187.6 1330.0,185.2 1331.0,184.3 1332.0,184.4 1333.0,188.3 1334.0,188.5 1335.0,187.2 1336.0,183.0 1337.0,182.0 1338.0,181.8 1339.0,182.1 1340.0,180.9 1341.0,179.8 1342.0,179.5 1343.0,177.9 1344.0,176.2 1345.0,182.7 1346.0,183.2 1347.0,189.2 1348.0,186.3 1349.0,189.8 1350.0,183.7 1351.0,182.7 1352.0,182.1 1353.0,187.8 1354.0,193.8 1355.0,194.3 1356.0,195.3 1357.0,192.8 1358.0,195.2 1359.0,192.7 1360.0,190.2 1361.0,188.3 1362.0,186.1 1363.0,188.0 1364.0,184.4 1365.0,186.3 1366.0,187.9 1367.0,188.3 1368.0,188.0 1369.0,186.3 1370.0,187.2 1371.0,184.6 1372.0,183.2 1373.0,184.6 1374.0,188.0 1375.0,186.3 1376.0,189.4 1377.0,190.4 1378.0,192.0 1379.0,189.0 1380.0,185.7 1381.0,187.7 1382.0,185.7 1383.0,187.6 1384.0,183.7 1385.0,184.0 1386.0,184.9 1387.0,189.2 1388.0,190.2 1389.0,186.3 1390.0,186.5 1391.0,187.0 1392.0,189.3 1393.0,190.9 1394.0,193.0 1395.0,191.1 1396.0,192.5 1397.0,190.8 1398.0,194.7 1399.0,188.4 1400.0,187.2 1401.0,181.4 1402.0,186.6 1403.0,189.1 1404.0,190.6 1405.0,183.8 1406.0,175.7 1407.0,177.5 1408.0,177.3 1409.0,179.1 1410.0,179.7 1411.0,182.2 1412.0,183.4 1413.0,187.3 1414.0,185.4 1415.0,188.1 1416.0,189.0 1417.0,192.8 1418.0,192.3 1419.0,188.9 1420.0,188.3 1421.0,186.6 1422.0,191.4 1423.0,192.0 1424.0,192.1 1425.0,187.1 1426.0,184.2 1427.0,182.5 1428.0,182.5 1429.0,184.0 1430.0,186.1 1431.0,187.4 1432.0,190.7 1433.0,189.7 1434.0,189.5 1435.0,190.9 1436.0,189.5 1437.0,189.0 1438.0,184.5 1439.0,189.3 1440.0,190.6 1441.0,190.6 1442.0,190.3 1443.0,190.4 1444.0,192.3 1445.0,187.2 1446.0,184.9 1447.0,183.8 1448.0,185.0 1449.0,185.3 1450.0,186.3 1451.0,187.3 1452.0,189.4 1453.0,190.3 1454.0,191.8 1455.0,191.7 1456.0,188.9 1457.0,186.8 1458.0,186.2 1459.0,186.6 1460.0,187.3 1461.0,187.5 1462.0,188.7 1463.0,188.9 1464.0,190.4 1465.0,192.4 1466.0,192.2 1467.0,191.0 1468.0,188.3 1469.0,196.9 1470.0,201.3 1471.0,206.2 1472.0,204.8 1473.0,200.6 1474.0,194.9 1475.0,189.3 1476.0,186.6 1477.0,186.9 1478.0,187.3 1479.0,185.9 1480.0,184.5 1481.0,189.7 1482.0,188.0 1483.0,186.1 1484.0,184.7 1485.0,186.9 1486.0,190.2 1487.0,188.7 1488.0,183.8 1489.0,181.3 1490.0,183.7 1491.0,190.1 1492.0,193.5 1493.0,192.3 1494.0,193.9 1495.0,190.2 1496.0,188.1 1497.0,184.6 1498.0,186.8 1499.0,186.2 1500.0,183.3 1501.0,183.0 1502.0,186.5 1503.0,186.5 1504.0,186.0 1505.0,184.1 1506.0,187.1 1507.0,188.2 1508.0,189.4 1509.0,188.3 1510.0,190.0 1511.0,192.1 1512.0,193.0 1513.0,193.6 1514.0,189.9 1515.0,190.7 1516.0,189.6 1517.0,193.7 1518.0,192.4 1519.0,190.3 1520.0,187.6 1521.0,184.8 1522.0,184.7 1523.0,183.3 1524.0,187.6 1525.0,186.9 1526.0,184.4 1527.0,183.8 1528.0,186.5 1529.0,190.3 1530.0,192.0 1531.0,190.9 1532.0,191.0 1533.0,189.9 1534.0,187.2 1535.0,187.9 1536.0,186.6 1537.0,191.5 1538.0,191.9 1539.0,192.2 1540.0,189.1 1541.0,189.5 1542.0,193.6 1543.0,193.4 1544.0,197.4 1545.0,192.4 1546.0,193.7 1547.0,189.7 1548.0,193.3 1549.0,190.5 1550.0,186.8 1551.0,184.3 1552.0,188.5 1553.0,192.5 1554.0,196.8 1555.0,196.2 1556.0,195.7 1557.0,192.6 1558.0,193.5 1559.0,195.6 1560.0,190.8 1561.0,188.5 1562.0,178.5 1563.0,182.8 1564.0,182.9 1565.0,191.3 1566.0,193.3 1567.0,193.6 1568.0,192.1 1569.0,188.6 1570.0,187.3 1571.0,188.3 1572.0,189.5 1573.0,190.2 1574.0,191.4 1575.0,189.8 1576.0,191.6 1577.0,191.7 1578.0,192.3 1579.0,191.6 1580.0,189.8 1581.0,188.7 1582.0,191.1 1583.0,193.0 1584.0,194.6 1585.0,193.6 1586.0,193.4 1587.0,195.2 1588.0,201.2 1589.0,204.9 1590.0,213.3 1591.0,205.0 1592.0,199.4 1593.0,189.4 1594.0,187.0 1595.0,186.2 1596.0,188.7 1597.0,186.9 1598.0,187.1 1599.0,189.4 1600.0,189.4 1601.0,189.2 1602.0,183.6 1603.0,181.2 1604.0,181.0 1605.0,185.5 1606.0,183.5 1607.0,185.4 1608.0,188.8 1609.0,191.0 1610.0,194.8 1611.0,194.7 1612.0,196.3 1613.0,197.8 1614.0,193.3 1615.0,194.7 1616.0,192.5 1617.0,193.5 1618.0,195.7 1619.0,201.0 1620.0,200.6 1621.0,196.9 1622.0,193.3 1623.0,191.8 1624.0,192.4 1625.0,192.1 1626.0,194.6 1627.0,193.8 1628.0,189.1 1629.0,190.1 1630.0,185.5 1631.0,186.9 1632.0,184.8 1633.0,186.9 1634.0,190.4 1635.0,192.2 1636.0,192.6 1637.0,192.7 1638.0,196.0 1639.0,197.1 1640.0,196.8 1641.0,195.9 1642.0,197.3 1643.0,194.0 1644.0,195.3 1645.0,200.1 1646.0,199.2 1647.0,194.9 1648.0,192.0 1649.0,197.9 1650.0,199.5 1651.0,197.6 1652.0,192.8 1653.0,192.2 1654.0,193.8 1655.0,193.1 1656.0,189.1 1657.0,187.2 1658.0,186.2 1659.0,187.9 1660.0,187.7 1661.0,193.0 1662.0,192.2 1663.0,191.2 1664.0,189.2 1665.0,191.1 1666.0,190.5 1667.0,190.2 1668.0,192.0 1669.0,194.9 1670.0,198.0 1671.0,194.9 1672.0,192.1 1673.0,183.5 1674.0,189.3 1675.0,189.1 1676.0,194.2 1677.0,191.2 1678.0,190.1 1679.0,191.0 1680.0,190.2 1681.0,189.8 1682.0,189.9 1683.0,191.8 1684.0,191.4 1685.0,192.2 1686.0,190.0 1687.0,194.5 1688.0,193.9 1689.0,196.0 1690.0,193.4 1691.0,193.8 1692.0,191.0 1693.0,192.1 1694.0,188.7 1695.0,189.9 1696.0,192.2 1697.0,194.2 1698.0,193.8 1699.0,188.6 1700.0,186.8 1701.0,186.8 1702.0,190.3 1703.0,190.1 1704.0,188.7 1705.0,185.1 1706.0,189.6 1707.0,189.3 1708.0,189.4 1709.0,190.5 1710.0,192.7 1711.0,194.2 1712.0,192.6 1713.0,192.9 1714.0,194.9 1715.0,197.3 1716.0,197.0 1717.0,197.0 1718.0,197.0 1719.0,197.9 1720.0,199.0 1721.0,199.4 1722.0,201.5 1723.0,201.8 1724.0,204.8 1725.0,204.9 1726.0,204.2 1727.0,201.6 1728.0,208.9 1729.0,207.5 1730.0,212.2 1731.0,206.5 1732.0,210.0 1733.0,212.5 1734.0,208.3 1735.0,206.7 1736.0,203.4 1737.0,207.5 1738.0,207.0 1739.0,210.2 1740.0,210.9 1741.0,210.6 1742.0,208.5 1743.0,205.2 1744.0,210.8 1745.0,207.5 1746.0,212.0 1747.0,212.3 1748.0,213.0 1749.0,209.8 1750.0,203.1 1751.0,204.8 1752.0,209.5 1753.0,210.7 1754.0,210.6 1755.0,209.5 1756.0,211.7 1757.0,206.1 1758.0,204.7 1759.0,205.4 1760.0,211.2 1761.0,213.1 1762.0,206.2 1763.0,204.3 1764.0,203.8 1765.0,214.6 1766.0,212.4 1767.0,210.5 1768.0,205.8 1769.0,208.7 1770.0,207.9 1771.0,211.2 1772.0,208.8 1773.0,209.4 1774.0,204.9 1775.0,207.5 1776.0,206.1 1777.0,203.2 1778.0,206.2 1779.0,209.1 1780.0,209.8 1781.0,208.5 1782.0,210.9 1783.0,210.2 1784.0,209.5 1785.0,208.0 1786.0,212.2 1787.0,212.1 1788.0,207.9 1789.0,210.5 1790.0,211.5 1791.0,216.1 1792.0,214.0 1793.0,213.5 1794.0,213.5 1795.0,211.7 1796.0,209.3 1797.0,208.3 1798.0,209.9 1799.0,209.2 1800.0,212.1 1801.0,206.0 1802.0,203.5 1803.0,193.2 1804.0,190.4 1805.0,191.4 1806.0,193.6 1807.0,191.2 1808.0,188.3 1809.0,187.1 1810.0,185.1 1811.0,182.9 1812.0,182.1 1813.0,184.0 1814.0,186.0 1815.0,186.8 1816.0,188.8 1817.0,190.6 1818.0,190.9 1819.0,188.9 1820.0,187.2 1821.0,187.2 1822.0,187.9 1823.0,188.2 1824.0,186.2 1825.0,186.5 1826.0,186.8 1827.0,188.4 1828.0,188.9 1829.0,190.1 1830.0,191.2 1831.0,195.1 1832.0,190.4 1833.0,192.2 1834.0,186.6 1835.0,196.1 1836.0,199.7 1837.0,196.9 1838.0,193.6 1839.0,186.7 1840.0,190.3 1841.0,190.9 1842.0,185.3 1843.0,188.3" fill="none" stroke="#ececf2" stroke-width="1.35" stroke-linejoin="round"/></svg>
<span class="t" style="top:69.22px;font-size:17px;line-height:17px;color:#f4f4f4;left:783.37px;transform-origin:100% 50%;">40.0</span>
<span class="t" style="top:107.46px;font-size:17px;line-height:17px;color:#f4f4f4;left:783.37px;transform-origin:100% 50%;">20.0</span>
<span class="t" style="top:145.70px;font-size:17px;line-height:17px;color:#f4f4f4;left:792.82px;transform-origin:100% 50%;">0.0</span>
<span class="t" style="top:183.94px;font-size:17px;line-height:17px;color:#f4f4f4;left:777.71px;transform-origin:100% 50%;">-20.0</span>
<span class="t" style="top:222.18px;font-size:17px;line-height:17px;color:#f4f4f4;left:777.71px;transform-origin:100% 50%;">-40.0</span>
<span class="t" style="top:260.42px;font-size:17px;line-height:17px;color:#f4f4f4;left:777.71px;transform-origin:100% 50%;">-60.0</span>
<span class="t" style="top:274.20px;font-size:17px;line-height:17px;color:#f4f4f4;left:918.53px;transform:translateX(-50%);">210.8</span>
<span class="t" style="top:274.20px;font-size:17px;line-height:17px;color:#f4f4f4;left:1017.33px;transform:translateX(-50%);">211</span>
<span class="t" style="top:274.20px;font-size:17px;line-height:17px;color:#f4f4f4;left:1116.13px;transform:translateX(-50%);">211.2</span>
<span class="t" style="top:274.20px;font-size:17px;line-height:17px;color:#f4f4f4;left:1214.93px;transform:translateX(-50%);">211.4</span>
<span class="t" style="top:274.20px;font-size:17px;line-height:17px;color:#f4f4f4;left:1313.73px;transform:translateX(-50%);">211.6</span>
<span class="t" style="top:274.20px;font-size:17px;line-height:17px;color:#f4f4f4;left:1412.53px;transform:translateX(-50%);">211.8</span>
<span class="t" style="top:274.20px;font-size:17px;line-height:17px;color:#f4f4f4;left:1511.33px;transform:translateX(-50%);">212</span>
<span class="t" style="top:274.20px;font-size:17px;line-height:17px;color:#f4f4f4;left:1610.13px;transform:translateX(-50%);">212.2</span>
<span class="t" style="top:274.20px;font-size:17px;line-height:17px;color:#f4f4f4;left:1708.93px;transform:translateX(-50%);">212.4</span>
<span class="t" style="top:274.20px;font-size:17px;line-height:17px;color:#f4f4f4;left:1807.73px;transform:translateX(-50%);">212.6</span>
<span class="t" style="top:299.27px;font-size:19.5px;line-height:19.5px;color:#f4f4f4;left:1337.25px;transform:translateX(-50%) scaleX(1.0126);">Frequency (MHz)</span>
<span class="t" style="top:163.43px;font-size:19.6px;line-height:19.6px;color:#f4f4f4;left:741.77px;transform:translateX(-50%);transform:translateX(-50%) rotate(-90deg);">Magnitude (dB)</span>
<div style="left:30px;top:351px;width:72.6px;height:25px;border:1px solid #7e7e7e;border-radius:3.5px;background:#262525"></div>
<span class="t" style="top:356.83px;font-size:15.7px;line-height:15.7px;color:#fff;left:32.05px;transform-origin:0 50%;transform:scaleX(0.9528);">10B</span>
<svg style="left:76.4px;top:360.5px" width="14" height="8" viewBox="0 0 14 8"><polygon points="0.8,0.8 13.2,0.8 7,7.2" fill="#fff"/></svg>
<div style="left:117px;top:338px;width:1px;height:49px;background:#d0d0d0;"></div>
<div style="left:118px;top:338px;width:100.8px;height:49px;background:#ad1a18;"></div>
<span class="t" style="top:356.42px;font-size:18.8px;line-height:18.8px;color:#ff6464;left:136.69px;transform-origin:0 50%;transform:scaleX(1.0120);">EId: 1148</span>
<span class="t" style="top:355.97px;font-size:19.5px;line-height:19.5px;color:#e6e62e;left:241.73px;transform-origin:0 50%;transform:scaleX(0.9681);">rbb BRB/BLN K10B</span>
<span class="t" style="top:355.97px;font-size:19.5px;line-height:19.5px;color:#f4f4f4;left:432.30px;transform-origin:0 50%;transform:scaleX(1.0162);">2020-03-03</span>
<div style="left:540px;top:0;width:77px;height:966px;overflow:hidden;background:none"><span class="t" style="top:355.97px;font-size:19.5px;line-height:19.5px;color:#f4f4f4;left:5.30px;transform-origin:0 50%;transform:scaleX(0.9606);">09:05:33</span></div>
<div style="left:617px;top:338px;width:4px;height:49px;background:linear-gradient(90deg,#d8d8d8,#ffffff 50%,#e8e8e8);"></div>
<div style="left:633px;top:351px;width:30px;height:25.3px;border:1px solid #7e7e7e;border-radius:3.5px;background:#262525"></div>
<svg style="left:641.2px;top:360.65px" width="14" height="8" viewBox="0 0 14 8"><polygon points="0.8,0.8 13.2,0.8 7,7.2" fill="#fff"/></svg>
<svg style="left:692px;top:349px" width="76" height="32" viewBox="0 0 76 32">
<circle cx="15.8" cy="16.2" r="14.3" fill="#2465a6"/><circle cx="15.8" cy="16.2" r="5.9" fill="#ff1018"/>
<circle cx="59.4" cy="16.2" r="14.3" fill="#1e4268"/><rect x="54.4" y="9.9" width="10.6" height="12.6" fill="#0a0e14"/></svg>
<div style="left:1837px;top:349.3px;width:78px;height:25.6px;border:1px solid #7e7e7e;border-radius:3.5px;background:#262525"></div>
<span class="t" style="top:355.67px;font-size:15.2px;line-height:15.2px;color:#fff;left:1839.31px;transform-origin:0 50%;transform:scaleX(0.9868);">DAB</span>
<svg style="left:1883.9px;top:359.1px" width="14" height="8" viewBox="0 0 14 8"><polygon points="0.8,0.8 13.2,0.8 7,7.2" fill="#fff"/></svg>
<div style="left:0px;top:0;width:214px;height:966px;overflow:hidden;background:none"><span class="t" style="top:397.54px;font-size:25.5px;line-height:25.5px;color:#e6f02a;letter-spacing:0.6px;left:4.50px;transform-origin:0 50%;">No Service Selected</span></div>
<span class="t" style="top:440.97px;font-size:19.5px;line-height:19.5px;color:#fff;left:6.00px;transform-origin:0 50%;transform:scaleX(0.9938);">Antenne CB</span>
<span class="t" style="top:472.57px;font-size:19.5px;line-height:19.5px;color:#fff;left:6.00px;transform-origin:0 50%;transform:scaleX(0.9753);">Antenne FFO</span>
<span class="t" style="top:504.17px;font-size:19.5px;line-height:19.5px;color:#fff;left:6.00px;transform-origin:0 50%;transform:scaleX(1.0048);">Antenne P</span>
<span class="t" style="top:535.77px;font-size:19.5px;line-height:19.5px;color:#fff;left:6.00px;transform-origin:0 50%;transform:scaleX(0.9782);">Antenne PBG</span>
<span class="t" style="top:567.37px;font-size:19.5px;line-height:19.5px;color:#fff;left:6.00px;transform-origin:0 50%;transform:scaleX(0.9782);">Antenne PZL</span>
<span class="t" style="top:598.97px;font-size:19.5px;line-height:19.5px;color:#fff;left:6.00px;transform-origin:0 50%;transform:scaleX(0.9456);">COSMO</span>
<span class="t" style="top:630.57px;font-size:19.5px;line-height:19.5px;color:#fff;left:4.98px;transform-origin:0 50%;transform:scaleX(1.0234);">Fritz</span>
<span class="t" style="top:662.17px;font-size:19.5px;line-height:19.5px;color:#fff;left:4.94px;transform-origin:0 50%;transform:scaleX(1.0594);">Inforadio</span>
<span class="t" style="top:693.77px;font-size:19.5px;line-height:19.5px;color:#fff;left:4.95px;transform-origin:0 50%;transform:scaleX(1.0504);">radio1</span>
<span class="t" style="top:725.37px;font-size:19.5px;line-height:19.5px;color:#fff;left:5.00px;transform-origin:0 50%;transform:scaleX(1.0035);">radio1 CB</span>
<span class="t" style="top:756.97px;font-size:19.5px;line-height:19.5px;color:#fff;left:5.01px;transform-origin:0 50%;transform:scaleX(0.9852);">radio1 FFO</span>
<span class="t" style="top:788.57px;font-size:19.5px;line-height:19.5px;color:#fff;left:4.97px;transform-origin:0 50%;transform:scaleX(1.0329);">rbb 88.8</span>
<span class="t" style="top:820.17px;font-size:19.5px;line-height:19.5px;color:#fff;left:4.94px;transform-origin:0 50%;transform:scaleX(1.0619);">rbbKultur</span>
<span class="t" style="top:397.54px;font-size:25.5px;line-height:25.5px;color:#fff;left:226.45px;transform-origin:0 50%;transform:scaleX(1.0473);">Service Quality</span>
<span class="t" style="top:452.80px;font-size:17px;line-height:17px;color:#fff;left:233.00px;transform-origin:0 50%;transform:scaleX(0.9435);">SNR (dB)</span>
<div style="left:383px;top:444.9px;width:50px;height:31px;background:#808080;"></div>
<div style="left:383px;top:444.9px;width:10px;height:31px;background:#ff0000;"></div>
<span class="t" style="top:453.86px;font-size:14px;line-height:14px;color:#e4e4e4;left:408.10px;transform:translateX(-50%);">7.1</span>
<span class="t" style="top:491.30px;font-size:17px;line-height:17px;color:#fff;left:232.03px;transform-origin:0 50%;transform:scaleX(0.9678);">FIC (ok %)</span>
<div style="left:383px;top:483.4px;width:50px;height:31px;background:#808080;"></div>
<div style="left:383px;top:483.4px;width:19px;height:31px;background:#ff0000;"></div>
<span class="t" style="top:492.36px;font-size:14px;line-height:14px;color:#e4e4e4;left:408.10px;transform:translateX(-50%);">38</span>
<span class="t" style="top:529.80px;font-size:17px;line-height:17px;color:#fff;left:232.04px;transform-origin:0 50%;transform:scaleX(0.9631);">RS (ok %)</span>
<div style="left:383px;top:521.9px;width:50px;height:31px;background:#808080;"></div>
<span class="t" style="top:568.30px;font-size:17px;line-height:17px;color:#fff;left:231.95px;transform-origin:0 50%;transform:scaleX(1.0459);">Null Symbol</span>
<div style="left:383px;top:560.4px;width:50px;height:31px;background:#808080;"></div>
<div style="left:383px;top:560.4px;width:50px;height:31px;background:#008000;"></div>
<span class="t" style="top:606.80px;font-size:17px;line-height:17px;color:#fff;left:233.00px;transform-origin:0 50%;transform:scaleX(1.0047);">SymbolTime (ms)</span>
<div style="left:383px;top:598.9px;width:50px;height:31px;background:#808080;"></div>
<div style="left:383px;top:598.9px;width:5px;height:31px;background:#008000;"></div>
<span class="t" style="top:607.86px;font-size:14px;line-height:14px;color:#e4e4e4;left:408.09px;transform:translateX(-50%);">0.16</span>
<span class="t" style="top:645.30px;font-size:17px;line-height:17px;color:#fff;left:232.00px;transform-origin:0 50%;transform:scaleX(0.9975);">FrameTime (ms)</span>
<div style="left:383px;top:637.4px;width:50px;height:31px;background:#808080;"></div>
<div style="left:383px;top:637.4px;width:32px;height:31px;background:#008000;"></div>
<span class="t" style="top:646.36px;font-size:14px;line-height:14px;color:#e4e4e4;left:408.09px;transform:translateX(-50%);">95.9</span>
<div class="tabg" style="left:460.5px;top:396.5px;width:74px;height:35px;box-shadow:inset -1px 0 0 rgba(0,0,0,.18)"></div>
<span class="t" style="top:405.45px;font-size:22px;line-height:22px;color:#dcdcdc;left:476.61px;transform-origin:0 50%;transform:scaleX(0.8871);">Sync</span>
<div style="left:535.5px;top:396.5px;width:54px;height:36px;background:#1b5a89;border-radius:3px 13px 0 0;box-shadow:inset 0 1px 0 rgba(255,255,255,.22),inset -1px 0 0 rgba(255,255,255,.16),inset 1px 0 0 rgba(255,255,255,.12)"></div>
<span class="t" style="top:405.45px;font-size:22px;line-height:22px;color:#fff;left:552.00px;transform-origin:0 50%;transform:scaleX(0.8961);">TII</span>
<div class="tabg" style="left:590.5px;top:396.5px;width:87px;height:35px;box-shadow:inset -1px 0 0 rgba(0,0,0,.18)"></div>
<span class="t" style="top:405.45px;font-size:22px;line-height:22px;color:#dcdcdc;left:607.50px;transform-origin:0 50%;transform:scaleX(0.9816);">Audio</span>
<div class="tabg" style="left:678.5px;top:396.5px;width:72px;height:35px;box-shadow:inset -1px 0 0 rgba(0,0,0,.18)"></div>
<span class="t" style="top:405.45px;font-size:22px;line-height:22px;color:#dcdcdc;left:695.50px;transform-origin:0 50%;transform:scaleX(0.8710);">AAC</span>
<div class="tabg" style="left:751.5px;top:396.5px;width:107px;height:35px;box-shadow:inset -1px 0 0 rgba(0,0,0,.18)"></div>
<span class="t" style="top:405.45px;font-size:22px;line-height:22px;color:#dcdcdc;left:767.01px;transform-origin:0 50%;transform:scaleX(0.9891);">Options</span>
<div style="left:494px;top:443.5px;width:12px;height:12px;border-radius:50%;background:#ff1010"></div>
<div style="left:530.5px;top:443px;width:10.5px;height:13px;background:#12304e;"></div>
<div style="left:469.5px;top:466.8px;width:309px;height:1.6px;background:#a4bcd6;"></div>
<span class="t" style="top:492.22px;font-size:19px;line-height:19px;color:#fff;left:468.52px;transform-origin:0 50%;transform:scaleX(0.9800);">Pattern</span>
<span class="t" style="top:492.22px;font-size:19px;line-height:19px;color:#fff;left:552.47px;transform-origin:0 50%;transform:scaleX(1.0278);">MainId</span>
<span class="t" style="top:492.22px;font-size:19px;line-height:19px;color:#fff;left:635.50px;transform-origin:0 50%;transform:scaleX(0.9677);">SubId</span>
<span class="t" style="top:492.22px;font-size:19px;line-height:19px;color:#fff;left:708.00px;transform-origin:0 50%;transform:scaleX(0.9894);">Strength</span>
<div style="left:469.5px;top:512.6px;width:309px;height:1.2px;background:#9db8d2;"></div>
<div style="left:790.5px;top:431px;width:1px;height:535px;background:#3d7cb0;"></div>
<span class="t" style="top:454.71px;font-size:18px;line-height:18px;color:#fff;left:798.00px;transform-origin:0 50%;transform:scaleX(0.9553);">Threshold</span>
<div style="left:830.6px;top:494px;width:3px;height:135px;background:#dde1e8;border-radius:1.5px"></div>
<div class="knob" style="left:824.4px;top:627.9px;width:15.4px;height:15.4px;background:radial-gradient(circle at 25% 45%,#d8d8d8 0%,#b4b4b4 32%,#828282 68%,#5c5c5c 100%)"></div>
<span class="t" style="top:654.94px;font-size:16.5px;line-height:16.5px;color:#fff;left:815.50px;transform-origin:0 50%;transform:scaleX(0.9863);">0.02</span>
<span class="t" style="top:391.95px;font-size:17.5px;line-height:17.5px;color:#f4f4f4;left:1420.93px;transform:translateX(-50%) scaleX(1.0199);">Channel Impulse Response (CIR)</span>
<svg style="left:1870px;top:388px" width="33" height="25" viewBox="0 0 33 25">
<polygon points="4.9,6.2 20.1,6.2 12.5,19" fill="none" stroke="#aabdd6" stroke-width="1.3"/>
<g stroke="#cc5a24" stroke-width="3.1"><line x1="28.6" y1="6" x2="41" y2="20"/><line x1="28.6" y1="20" x2="41" y2="6"/></g></svg>
<div class="radio" style="left:935.5px;top:428px;width:16.5px;height:16.5px"></div>
<span class="t" style="top:429.17px;font-size:15px;line-height:15px;color:#fff;left:956.06px;transform-origin:0 50%;transform:scaleX(0.9373);">Freeze</span>
<div class="radio" style="left:1024px;top:428px;width:16.5px;height:16.5px"></div>
<span class="t" style="top:429.17px;font-size:15px;line-height:15px;color:#fff;left:1045.50px;transform-origin:0 50%;transform:scaleX(0.9766);">Gradient</span>
<span class="t" style="top:480.67px;font-size:15px;line-height:15px;color:#fff;left:941.00px;transform-origin:0 50%;">Smoothing Level</span>
<div style="left:944px;top:503.7px;width:1px;height:4.5px;background:#9c9c9c;"></div>
<div style="left:960px;top:503.7px;width:1px;height:4.5px;background:#9c9c9c;"></div>
<div style="left:977px;top:503.7px;width:1px;height:4.5px;background:#9c9c9c;"></div>
<div style="left:993px;top:503.7px;width:1px;height:4.5px;background:#9c9c9c;"></div>
<div style="left:1009px;top:503.7px;width:1px;height:4.5px;background:#9c9c9c;"></div>
<div style="left:1026px;top:503.7px;width:1px;height:4.5px;background:#9c9c9c;"></div>
<div style="left:1042px;top:503.7px;width:1px;height:4.5px;background:#9c9c9c;"></div>
<div style="left:1059px;top:503.7px;width:1px;height:4.5px;background:#9c9c9c;"></div>
<div style="left:1075px;top:503.7px;width:1px;height:4.5px;background:#9c9c9c;"></div>
<div style="left:1091px;top:503.7px;width:1px;height:4.5px;background:#9c9c9c;"></div>
<div style="left:1108px;top:503.7px;width:1px;height:4.5px;background:#3c3c3c;"></div>
<div style="left:935.8px;top:515.6px;width:171.79999999999995px;height:2.6px;background:#ececec;border-radius:1.3px"></div>
<div class="knob" style="left:1017.65px;top:509.25px;width:16.3px;height:16.3px"></div>
<span class="t" style="top:548.17px;font-size:15px;line-height:15px;color:#fff;left:941.00px;transform-origin:0 50%;">Zoom X</span>
<div style="left:935.8px;top:578.1px;width:171.79999999999995px;height:2.6px;background:#ececec;border-radius:1.3px"></div>
<div class="knob" style="left:936.0500000000001px;top:571.75px;width:16.3px;height:16.3px"></div>
<span class="t" style="top:609.87px;font-size:15px;line-height:15px;color:#fff;left:941.00px;transform-origin:0 50%;">Zoom Y</span>
<div style="left:935.8px;top:640.6px;width:171.79999999999995px;height:2.6px;background:#ececec;border-radius:1.3px"></div>
<div class="knob" style="left:936.0500000000001px;top:634.25px;width:16.3px;height:16.3px"></div>
<span class="t" style="top:672.67px;font-size:15px;line-height:15px;color:#fff;left:941.00px;transform-origin:0 50%;transform:scaleX(0.9918);">x-Axis</span>
<div style="left:923px;top:687px;width:980px;height:6px;background:#8a8a8a;"></div>
<div style="left:1115.2px;top:415px;width:6.5px;height:206px;background:linear-gradient(90deg,#9c9c9c,#b0b0b0 50%,#9c9c9c);border-radius:3px"></div>
<svg style="left:923px;top:413px" width="980" height="274" viewBox="923 413 980 274"><rect x="1355.5" y="433.4" width="17" height="196.20000000000005" fill="#474747"/><rect x="1355.5" y="433.4" width="1.5" height="196.20000000000005" fill="#606060"/><g stroke="#929292" stroke-width="1" shape-rendering="crispEdges"><line x1="1245" y1="472.5" x2="1865" y2="472.5"/><line x1="1245" y1="512.5" x2="1865" y2="512.5"/><line x1="1245" y1="551.5" x2="1865" y2="551.5"/><line x1="1245" y1="591.5" x2="1865" y2="591.5"/><line x1="1274.5" y1="433.4" x2="1274.5" y2="629.6"/><line x1="1316.5" y1="433.4" x2="1316.5" y2="629.6"/><line x1="1357.5" y1="433.4" x2="1357.5" y2="629.6"/><line x1="1398.5" y1="433.4" x2="1398.5" y2="629.6"/><line x1="1440.5" y1="433.4" x2="1440.5" y2="629.6"/><line x1="1481.5" y1="433.4" x2="1481.5" y2="629.6"/><line x1="1523.5" y1="433.4" x2="1523.5" y2="629.6"/><line x1="1564.5" y1="433.4" x2="1564.5" y2="629.6"/><line x1="1605.5" y1="433.4" x2="1605.5" y2="629.6"/><line x1="1647.5" y1="433.4" x2="1647.5" y2="629.6"/><line x1="1688.5" y1="433.4" x2="1688.5" y2="629.6"/><line x1="1730.5" y1="433.4" x2="1730.5" y2="629.6"/><line x1="1771.5" y1="433.4" x2="1771.5" y2="629.6"/><line x1="1812.5" y1="433.4" x2="1812.5" y2="629.6"/><line x1="1854.5" y1="433.4" x2="1854.5" y2="629.6"/></g><rect x="1245.5" y="433.09999999999997" width="619.5" height="196.70000000000005" fill="none" stroke="#a6a6a6" stroke-width="1.5"/><line x1="1245.3" y1="433.4" x2="1245.3" y2="629.6" stroke="#b23636" stroke-width="1.1"/><line x1="1372.6" y1="433.4" x2="1372.6" y2="629.6" stroke="#d8d820" stroke-width="1" stroke-dasharray="1.2 1.2"/><polyline points="1247.0,577.6 1248.0,570.6 1249.0,564.8 1250.0,574.0 1251.0,577.8 1252.0,574.3 1253.0,565.8 1254.0,562.0 1255.0,569.3 1256.0,574.4 1257.0,572.5 1258.0,569.1 1259.0,568.8 1260.0,571.2 1261.0,573.9 1262.0,576.6 1263.0,582.7 1264.0,581.4 1265.0,579.7 1266.0,569.2 1267.0,574.1 1268.0,572.0 1269.0,574.2 1270.0,571.6 1271.0,575.2 1272.0,575.3 1273.0,579.4 1274.0,581.2 1275.0,588.4 1276.0,588.6 1277.0,578.8 1278.0,574.6 1279.0,566.5 1280.0,572.6 1281.0,570.2 1282.0,572.9 1283.0,571.4 1284.0,572.8 1285.0,576.3 1286.0,574.0 1287.0,577.1 1288.0,571.9 1289.0,572.2 1290.0,561.8 1291.0,557.2 1292.0,553.1 1293.0,561.0 1294.0,568.9 1295.0,574.9 1296.0,572.8 1297.0,575.8 1298.0,571.1 1299.0,570.3 1300.0,566.0 1301.0,567.5 1302.0,572.9 1303.0,574.2 1304.0,574.5 1305.0,573.4 1306.0,571.3 1307.0,567.2 1308.0,553.8 1309.0,549.0 1310.0,551.0 1311.0,555.5 1312.0,559.1 1313.0,560.5 1314.0,571.2 1315.0,568.0 1316.0,565.6 1317.0,563.3 1318.0,571.2 1319.0,566.9 1320.0,572.8 1321.0,566.7 1322.0,575.1 1323.0,568.8 1324.0,570.4 1325.0,574.6 1326.0,577.1 1327.0,575.1 1328.0,569.4 1329.0,564.4 1330.0,558.3 1331.0,569.3 1332.0,565.6 1333.0,562.9 1334.0,558.7 1335.0,566.1 1336.0,575.2 1337.0,568.8 1338.0,563.5 1339.0,565.0 1340.0,561.3 1341.0,565.5 1342.0,567.2 1343.0,574.2 1344.0,578.6 1345.0,580.3 1346.0,572.1 1347.0,568.4 1348.0,565.9 1349.0,572.4 1350.0,573.5 1351.0,571.0 1352.0,573.3 1353.0,573.0 1354.0,576.0 1355.0,582.7 1356.0,573.4 1357.0,571.8 1358.0,558.5 1359.0,564.6 1360.0,569.2 1361.0,568.8 1362.0,568.4 1363.0,561.8 1364.0,568.0 1365.0,568.8 1366.0,566.6 1367.0,566.8 1368.0,564.4 1369.0,563.0 1370.0,559.4 1371.0,552.7 1372.0,535.0 1373.0,523.1 1374.0,542.9 1375.0,556.2 1376.0,562.1 1377.0,564.0 1378.0,560.3 1379.0,566.5 1380.0,566.9 1381.0,568.2 1382.0,564.5 1383.0,559.3 1384.0,559.7 1385.0,557.7 1386.0,564.5 1387.0,566.4 1388.0,569.1 1389.0,566.4 1390.0,563.5 1391.0,567.1 1392.0,566.2 1393.0,566.5 1394.0,564.7 1395.0,560.8 1396.0,553.0 1397.0,538.9 1398.0,517.3 1399.0,506.8 1400.0,526.9 1401.0,545.7 1402.0,556.3 1403.0,560.6 1404.0,564.1 1405.0,565.1 1406.0,567.1 1407.0,565.7 1408.0,559.3 1409.0,559.6 1410.0,556.7 1411.0,568.0 1412.0,569.0 1413.0,581.1 1414.0,578.2 1415.0,580.2 1416.0,576.4 1417.0,574.9 1418.0,580.6 1419.0,574.4 1420.0,575.0 1421.0,567.8 1422.0,568.9 1423.0,572.6 1424.0,573.2 1425.0,567.5 1426.0,564.8 1427.0,565.3 1428.0,570.4 1429.0,567.1 1430.0,561.7 1431.0,563.1 1432.0,555.2 1433.0,553.3 1434.0,561.2 1435.0,565.6 1436.0,568.6 1437.0,567.7 1438.0,572.7 1439.0,576.0 1440.0,570.1 1441.0,564.9 1442.0,573.8 1443.0,574.7 1444.0,580.4 1445.0,575.6 1446.0,577.2 1447.0,576.1 1448.0,567.8 1449.0,564.2 1450.0,562.2 1451.0,565.9 1452.0,563.0 1453.0,562.1 1454.0,564.5 1455.0,567.7 1456.0,574.5 1457.0,576.9 1458.0,581.5 1459.0,582.3 1460.0,583.3 1461.0,583.3 1462.0,577.3 1463.0,567.7 1464.0,565.4 1465.0,568.6 1466.0,575.6 1467.0,565.7 1468.0,561.5 1469.0,561.7 1470.0,571.2 1471.0,572.6 1472.0,569.8 1473.0,571.0 1474.0,569.7 1475.0,566.3 1476.0,557.6 1477.0,558.7 1478.0,557.0 1479.0,560.1 1480.0,557.4 1481.0,564.7 1482.0,574.7 1483.0,578.5 1484.0,578.9 1485.0,577.0 1486.0,569.7 1487.0,566.0 1488.0,564.0 1489.0,577.9 1490.0,587.0 1491.0,584.7 1492.0,579.3 1493.0,566.2 1494.0,561.8 1495.0,559.4 1496.0,568.4 1497.0,569.7 1498.0,568.5 1499.0,567.9 1500.0,569.4 1501.0,569.4 1502.0,566.3 1503.0,562.8 1504.0,560.9 1505.0,555.1 1506.0,542.2 1507.0,523.8 1508.0,530.4 1509.0,548.6 1510.0,558.9 1511.0,564.2 1512.0,567.6 1513.0,567.7 1514.0,568.8 1515.0,568.2 1516.0,569.0 1517.0,569.0 1518.0,568.9 1519.0,561.5 1520.0,559.1 1521.0,562.9 1522.0,569.8 1523.0,565.1 1524.0,567.2 1525.0,569.3 1526.0,581.7 1527.0,585.0 1528.0,581.6 1529.0,580.5 1530.0,570.8 1531.0,573.3 1532.0,568.1 1533.0,574.1 1534.0,570.8 1535.0,569.1 1536.0,563.5 1537.0,566.5 1538.0,566.3 1539.0,571.1 1540.0,567.8 1541.0,563.4 1542.0,565.7 1543.0,562.6 1544.0,572.0 1545.0,570.5 1546.0,567.3 1547.0,564.3 1548.0,562.9 1549.0,570.3 1550.0,570.7 1551.0,567.9 1552.0,564.8 1553.0,562.5 1554.0,559.1 1555.0,566.2 1556.0,564.2 1557.0,568.8 1558.0,566.6 1559.0,569.6 1560.0,569.3 1561.0,569.1 1562.0,566.1 1563.0,563.2 1564.0,565.3 1565.0,566.6 1566.0,564.8 1567.0,561.1 1568.0,556.3 1569.0,556.4 1570.0,547.9 1571.0,551.3 1572.0,559.5 1573.0,563.4 1574.0,566.1 1575.0,566.5 1576.0,567.1 1577.0,566.9 1578.0,566.8 1579.0,566.3 1580.0,564.3 1581.0,562.6 1582.0,560.7 1583.0,556.4 1584.0,544.7 1585.0,537.6 1586.0,549.1 1587.0,557.3 1588.0,561.7 1589.0,565.4 1590.0,565.8 1591.0,565.0 1592.0,565.1 1593.0,565.7 1594.0,565.9 1595.0,566.8 1596.0,567.8 1597.0,569.0 1598.0,566.6 1599.0,562.0 1600.0,565.6 1601.0,562.9 1602.0,562.4 1603.0,558.1 1604.0,557.3 1605.0,562.7 1606.0,570.7 1607.0,577.7 1608.0,567.9 1609.0,560.3 1610.0,554.7 1611.0,562.9 1612.0,557.9 1613.0,553.1 1614.0,550.0 1615.0,558.4 1616.0,565.3 1617.0,573.0 1618.0,565.8 1619.0,568.7 1620.0,560.8 1621.0,561.3 1622.0,563.8 1623.0,559.0 1624.0,559.9 1625.0,556.1 1626.0,560.1 1627.0,569.9 1628.0,567.7 1629.0,571.3 1630.0,563.2 1631.0,568.8 1632.0,569.2 1633.0,572.7 1634.0,562.5 1635.0,567.0 1636.0,565.8 1637.0,573.7 1638.0,570.8 1639.0,574.7 1640.0,576.6 1641.0,574.4 1642.0,568.8 1643.0,568.5 1644.0,567.3 1645.0,565.3 1646.0,569.0 1647.0,572.8 1648.0,576.7 1649.0,577.7 1650.0,576.1 1651.0,579.3 1652.0,572.7 1653.0,576.1 1654.0,570.0 1655.0,572.8 1656.0,572.5 1657.0,573.3 1658.0,572.7 1659.0,572.8 1660.0,570.1 1661.0,569.6 1662.0,566.0 1663.0,568.5 1664.0,569.1 1665.0,567.8 1666.0,568.4 1667.0,562.0 1668.0,566.8 1669.0,578.3 1670.0,587.8 1671.0,577.6 1672.0,562.2 1673.0,555.6 1674.0,555.8 1675.0,562.7 1676.0,563.1 1677.0,568.0 1678.0,563.6 1679.0,561.0 1680.0,556.2 1681.0,546.2 1682.0,543.4 1683.0,547.5 1684.0,562.0 1685.0,566.6 1686.0,561.5 1687.0,560.2 1688.0,563.8 1689.0,565.8 1690.0,571.1 1691.0,567.8 1692.0,573.4 1693.0,563.8 1694.0,572.4 1695.0,567.0 1696.0,565.9 1697.0,564.2 1698.0,565.9 1699.0,568.2 1700.0,565.8 1701.0,569.6 1702.0,566.5 1703.0,567.3 1704.0,563.6 1705.0,575.8 1706.0,565.7 1707.0,568.6 1708.0,562.7 1709.0,567.3 1710.0,564.7 1711.0,562.4 1712.0,558.5 1713.0,560.2 1714.0,555.4 1715.0,560.3 1716.0,564.9 1717.0,563.6 1718.0,563.5 1719.0,559.7 1720.0,568.7 1721.0,566.4 1722.0,566.7 1723.0,560.7 1724.0,567.2 1725.0,566.0 1726.0,571.3 1727.0,567.4 1728.0,560.1 1729.0,563.7 1730.0,568.2 1731.0,574.9 1732.0,569.1 1733.0,561.2 1734.0,557.9 1735.0,556.5 1736.0,560.2 1737.0,569.8 1738.0,574.3 1739.0,571.8 1740.0,564.5 1741.0,564.1 1742.0,571.6 1743.0,574.2 1744.0,570.4 1745.0,561.0 1746.0,563.2 1747.0,568.4 1748.0,576.1 1749.0,580.0 1750.0,578.3 1751.0,569.3 1752.0,566.6 1753.0,563.8 1754.0,564.5 1755.0,566.0 1756.0,572.4 1757.0,580.1 1758.0,581.7 1759.0,577.6 1760.0,577.4 1761.0,568.5 1762.0,571.2 1763.0,570.5 1764.0,574.8 1765.0,570.5 1766.0,567.3 1767.0,561.1 1768.0,563.5 1769.0,561.8 1770.0,564.8 1771.0,556.8 1772.0,562.3 1773.0,565.1 1774.0,575.2 1775.0,571.1 1776.0,569.8 1777.0,565.1 1778.0,571.1 1779.0,571.2 1780.0,571.9 1781.0,562.4 1782.0,554.6 1783.0,549.9 1784.0,555.6 1785.0,563.2 1786.0,568.4 1787.0,566.0 1788.0,571.7 1789.0,568.9 1790.0,575.8 1791.0,574.4 1792.0,577.7 1793.0,574.9 1794.0,567.2 1795.0,566.2 1796.0,560.9 1797.0,565.7 1798.0,566.5 1799.0,571.0 1800.0,569.9 1801.0,569.2 1802.0,560.7 1803.0,561.5 1804.0,563.0 1805.0,564.6 1806.0,558.7 1807.0,549.8 1808.0,557.5 1809.0,562.4 1810.0,568.2 1811.0,567.4 1812.0,567.6 1813.0,569.8 1814.0,562.4 1815.0,563.0 1816.0,566.6 1817.0,578.7 1818.0,580.9 1819.0,576.2 1820.0,573.1 1821.0,564.9 1822.0,571.1 1823.0,564.8 1824.0,571.5 1825.0,562.2 1826.0,561.8 1827.0,557.5 1828.0,559.2 1829.0,563.1 1830.0,573.5 1831.0,577.8 1832.0,582.8 1833.0,578.1 1834.0,581.5 1835.0,573.4 1836.0,570.8 1837.0,566.7 1838.0,568.3 1839.0,570.2 1840.0,566.0 1841.0,564.1 1842.0,557.6 1843.0,559.3 1844.0,557.2 1845.0,560.6 1846.0,559.1 1847.0,561.9 1848.0,561.8 1849.0,560.2 1850.0,560.9 1851.0,557.5 1852.0,559.3 1853.0,559.6 1854.0,567.3 1855.0,571.4 1856.0,571.2 1857.0,564.5 1858.0,560.6 1859.0,555.8 1860.0,551.9 1861.0,557.7 1862.0,560.5 1863.0,571.0 1864.0,568.7 1865.0,563.0" fill="none" stroke="#ececec" stroke-width="1.3" stroke-linejoin="round"/><circle cx="1372.8" cy="517" r="5" fill="#1ea8dc"/><circle cx="1398.8" cy="501" r="5" fill="#f4ee14"/><circle cx="1507.3" cy="517" r="5" fill="#ee1010"/><circle cx="1570.2" cy="543.5" r="5" fill="#7a28dc"/></svg>
<span class="t" style="top:424.75px;font-size:17.3px;line-height:17.3px;color:#f4f4f4;left:1195.52px;transform-origin:100% 50%;">-10.0</span>
<span class="t" style="top:464.28px;font-size:17.3px;line-height:17.3px;color:#f4f4f4;left:1195.52px;transform-origin:100% 50%;">-20.0</span>
<span class="t" style="top:503.81px;font-size:17.3px;line-height:17.3px;color:#f4f4f4;left:1195.52px;transform-origin:100% 50%;">-30.0</span>
<span class="t" style="top:543.34px;font-size:17.3px;line-height:17.3px;color:#f4f4f4;left:1195.52px;transform-origin:100% 50%;">-40.0</span>
<span class="t" style="top:582.87px;font-size:17.3px;line-height:17.3px;color:#f4f4f4;left:1195.52px;transform-origin:100% 50%;">-50.0</span>
<span class="t" style="top:622.40px;font-size:17.3px;line-height:17.3px;color:#f4f4f4;left:1195.52px;transform-origin:100% 50%;">-60.0</span>
<span class="t" style="top:635.81px;font-size:13.7px;line-height:13.7px;color:#eeeeee;left:1274.01px;transform:translateX(-50%);">-60</span>
<span class="t" style="top:635.81px;font-size:13.7px;line-height:13.7px;color:#eeeeee;left:1315.41px;transform:translateX(-50%);">-40</span>
<span class="t" style="top:635.81px;font-size:13.7px;line-height:13.7px;color:#eeeeee;left:1356.81px;transform:translateX(-50%);">-20</span>
<span class="t" style="top:635.81px;font-size:13.7px;line-height:13.7px;color:#eeeeee;left:1398.21px;transform:translateX(-50%);">0</span>
<span class="t" style="top:635.81px;font-size:13.7px;line-height:13.7px;color:#eeeeee;left:1439.61px;transform:translateX(-50%);">20</span>
<span class="t" style="top:635.81px;font-size:13.7px;line-height:13.7px;color:#eeeeee;left:1481.01px;transform:translateX(-50%);">40</span>
<span class="t" style="top:635.81px;font-size:13.7px;line-height:13.7px;color:#eeeeee;left:1522.41px;transform:translateX(-50%);">60</span>
<span class="t" style="top:635.81px;font-size:13.7px;line-height:13.7px;color:#eeeeee;left:1563.81px;transform:translateX(-50%);">80</span>
<span class="t" style="top:635.81px;font-size:13.7px;line-height:13.7px;color:#eeeeee;left:1604.71px;transform:translateX(-50%);">100</span>
<span class="t" style="top:635.81px;font-size:13.7px;line-height:13.7px;color:#eeeeee;left:1646.11px;transform:translateX(-50%);">120</span>
<span class="t" style="top:635.81px;font-size:13.7px;line-height:13.7px;color:#eeeeee;left:1687.51px;transform:translateX(-50%);">140</span>
<span class="t" style="top:635.81px;font-size:13.7px;line-height:13.7px;color:#eeeeee;left:1728.91px;transform:translateX(-50%);">160</span>
<span class="t" style="top:635.81px;font-size:13.7px;line-height:13.7px;color:#eeeeee;left:1770.31px;transform:translateX(-50%);">180</span>
<span class="t" style="top:635.81px;font-size:13.7px;line-height:13.7px;color:#eeeeee;left:1812.21px;transform:translateX(-50%);">200</span>
<span class="t" style="top:635.81px;font-size:13.7px;line-height:13.7px;color:#eeeeee;left:1853.61px;transform:translateX(-50%);">220</span>
<span class="t" style="top:656.71px;font-size:18px;line-height:18px;color:#f4f4f4;left:1555.00px;transform:translateX(-50%) scaleX(0.9349);">Distance Difference (km)</span>
<span class="t" style="top:522.70px;font-size:17px;line-height:17px;color:#f4f4f4;left:1169.83px;transform:translateX(-50%);transform:translateX(-50%) rotate(-90deg);">Magnitude (dB)</span>
<span class="t" style="top:696.95px;font-size:17.5px;line-height:17.5px;color:#f4f4f4;left:1420.37px;transform:translateX(-50%) scaleX(1.0028);">TII Carriers</span>
<svg style="left:1870px;top:693px" width="33" height="25" viewBox="0 0 33 25">
<polygon points="4.9,6.2 20.1,6.2 12.5,19" fill="none" stroke="#aabdd6" stroke-width="1.3"/>
<g stroke="#cc5a24" stroke-width="3.1"><line x1="28.6" y1="6" x2="41" y2="20"/><line x1="28.6" y1="20" x2="41" y2="6"/></g></svg>
<svg style="left:923px;top:718px" width="980" height="244" viewBox="923 718 980 244"><g stroke="#949494" stroke-width="1" shape-rendering="crispEdges"><line x1="1033.5" y1="871.5" x2="1857.5" y2="871.5"/><line x1="1033.5" y1="838.5" x2="1857.5" y2="838.5"/><line x1="1033.5" y1="805.5" x2="1857.5" y2="805.5"/><line x1="1033.5" y1="771.5" x2="1857.5" y2="771.5"/><line x1="1084.5" y1="737" x2="1084.5" y2="903.5"/><line x1="1164.5" y1="737" x2="1164.5" y2="903.5"/><line x1="1245.5" y1="737" x2="1245.5" y2="903.5"/><line x1="1325.5" y1="737" x2="1325.5" y2="903.5"/><line x1="1406.5" y1="737" x2="1406.5" y2="903.5"/><line x1="1486.5" y1="737" x2="1486.5" y2="903.5"/><line x1="1567.5" y1="737" x2="1567.5" y2="903.5"/><line x1="1647.5" y1="737" x2="1647.5" y2="903.5"/><line x1="1728.5" y1="737" x2="1728.5" y2="903.5"/><line x1="1808.5" y1="737" x2="1808.5" y2="903.5"/></g><rect x="1033.8" y="736.7" width="823.7" height="166.8" fill="none" stroke="#a8a8a8" stroke-width="1.5"/><line x1="1033.7" y1="737" x2="1033.7" y2="903.5" stroke="#b23636" stroke-width="1.1"/><line x1="1033.5" y1="901.3" x2="1137" y2="901.3" stroke="#c8c8c8" stroke-width="1"/><line x1="1755" y1="901.3" x2="1857.5" y2="901.3" stroke="#c8c8c8" stroke-width="1"/><line x1="1136.8" y1="737" x2="1136.8" y2="903.5" stroke="#d0d022" stroke-width="1.6" stroke-dasharray="1.6 1.4"/><line x1="1291.3" y1="737" x2="1291.3" y2="903.5" stroke="#d0d022" stroke-width="1.6" stroke-dasharray="1.6 1.4"/><line x1="1445.8" y1="737" x2="1445.8" y2="903.5" stroke="#d0d022" stroke-width="1.6" stroke-dasharray="1.6 1.4"/><line x1="1600.4" y1="737" x2="1600.4" y2="903.5" stroke="#d0d022" stroke-width="1.6" stroke-dasharray="1.6 1.4"/><line x1="1754.9" y1="737" x2="1754.9" y2="903.5" stroke="#d0d022" stroke-width="1.6" stroke-dasharray="1.6 1.4"/><line x1="1161.5" y1="871" x2="1161.5" y2="903.5" stroke="#b8b8b8" stroke-width="1.3"/><line x1="1218.8" y1="851" x2="1218.8" y2="903.5" stroke="#b8b8b8" stroke-width="1.3"/><line x1="1238.2" y1="737" x2="1238.2" y2="903.5" stroke="#b8b8b8" stroke-width="1.3"/><line x1="1252.5" y1="889.3" x2="1252.5" y2="903.5" stroke="#b8b8b8" stroke-width="1.3"/><line x1="1315.6" y1="891.3" x2="1315.6" y2="903.5" stroke="#b8b8b8" stroke-width="1.3"/><line x1="1335" y1="837.8" x2="1335" y2="903.5" stroke="#b8b8b8" stroke-width="1.3"/></svg>
<span class="t" style="top:896.10px;font-size:17px;line-height:17px;color:#f4f4f4;left:997.82px;transform-origin:100% 50%;">0.0</span>
<span class="t" style="top:862.77px;font-size:17px;line-height:17px;color:#f4f4f4;left:997.82px;transform-origin:100% 50%;">0.2</span>
<span class="t" style="top:829.44px;font-size:17px;line-height:17px;color:#f4f4f4;left:997.82px;transform-origin:100% 50%;">0.4</span>
<span class="t" style="top:796.11px;font-size:17px;line-height:17px;color:#f4f4f4;left:997.82px;transform-origin:100% 50%;">0.6</span>
<span class="t" style="top:762.78px;font-size:17px;line-height:17px;color:#f4f4f4;left:997.82px;transform-origin:100% 50%;">0.8</span>
<span class="t" style="top:729.45px;font-size:17px;line-height:17px;color:#f4f4f4;left:997.82px;transform-origin:100% 50%;">1.0</span>
<span class="t" style="top:909.29px;font-size:16.8px;line-height:16.8px;color:#f4f4f4;left:1083.86px;transform:translateX(-50%);">-900</span>
<span class="t" style="top:909.29px;font-size:16.8px;line-height:16.8px;color:#f4f4f4;left:1164.34px;transform:translateX(-50%);">-700</span>
<span class="t" style="top:909.29px;font-size:16.8px;line-height:16.8px;color:#f4f4f4;left:1244.82px;transform:translateX(-50%);">-500</span>
<span class="t" style="top:909.29px;font-size:16.8px;line-height:16.8px;color:#f4f4f4;left:1325.30px;transform:translateX(-50%);">-300</span>
<span class="t" style="top:909.29px;font-size:16.8px;line-height:16.8px;color:#f4f4f4;left:1405.78px;transform:translateX(-50%);">-100</span>
<span class="t" style="top:909.29px;font-size:16.8px;line-height:16.8px;color:#f4f4f4;left:1485.76px;transform:translateX(-50%);">100</span>
<span class="t" style="top:909.29px;font-size:16.8px;line-height:16.8px;color:#f4f4f4;left:1566.74px;transform:translateX(-50%);">300</span>
<span class="t" style="top:909.29px;font-size:16.8px;line-height:16.8px;color:#f4f4f4;left:1647.22px;transform:translateX(-50%);">500</span>
<span class="t" style="top:909.29px;font-size:16.8px;line-height:16.8px;color:#f4f4f4;left:1727.70px;transform:translateX(-50%);">700</span>
<span class="t" style="top:909.29px;font-size:16.8px;line-height:16.8px;color:#f4f4f4;left:1808.18px;transform:translateX(-50%);">900</span>
<span class="t" style="top:933.44px;font-size:16.5px;line-height:16.5px;color:#f4f4f4;left:1446.15px;transform:translateX(-50%) scaleX(0.9955);">TII Subcarrier</span>
<span class="t" style="top:812.39px;font-size:16.6px;line-height:16.6px;color:#f4f4f4;left:972.62px;transform:translateX(-50%);transform:translateX(-50%) rotate(-90deg);">Magnitude</span>
</div></body></html>
